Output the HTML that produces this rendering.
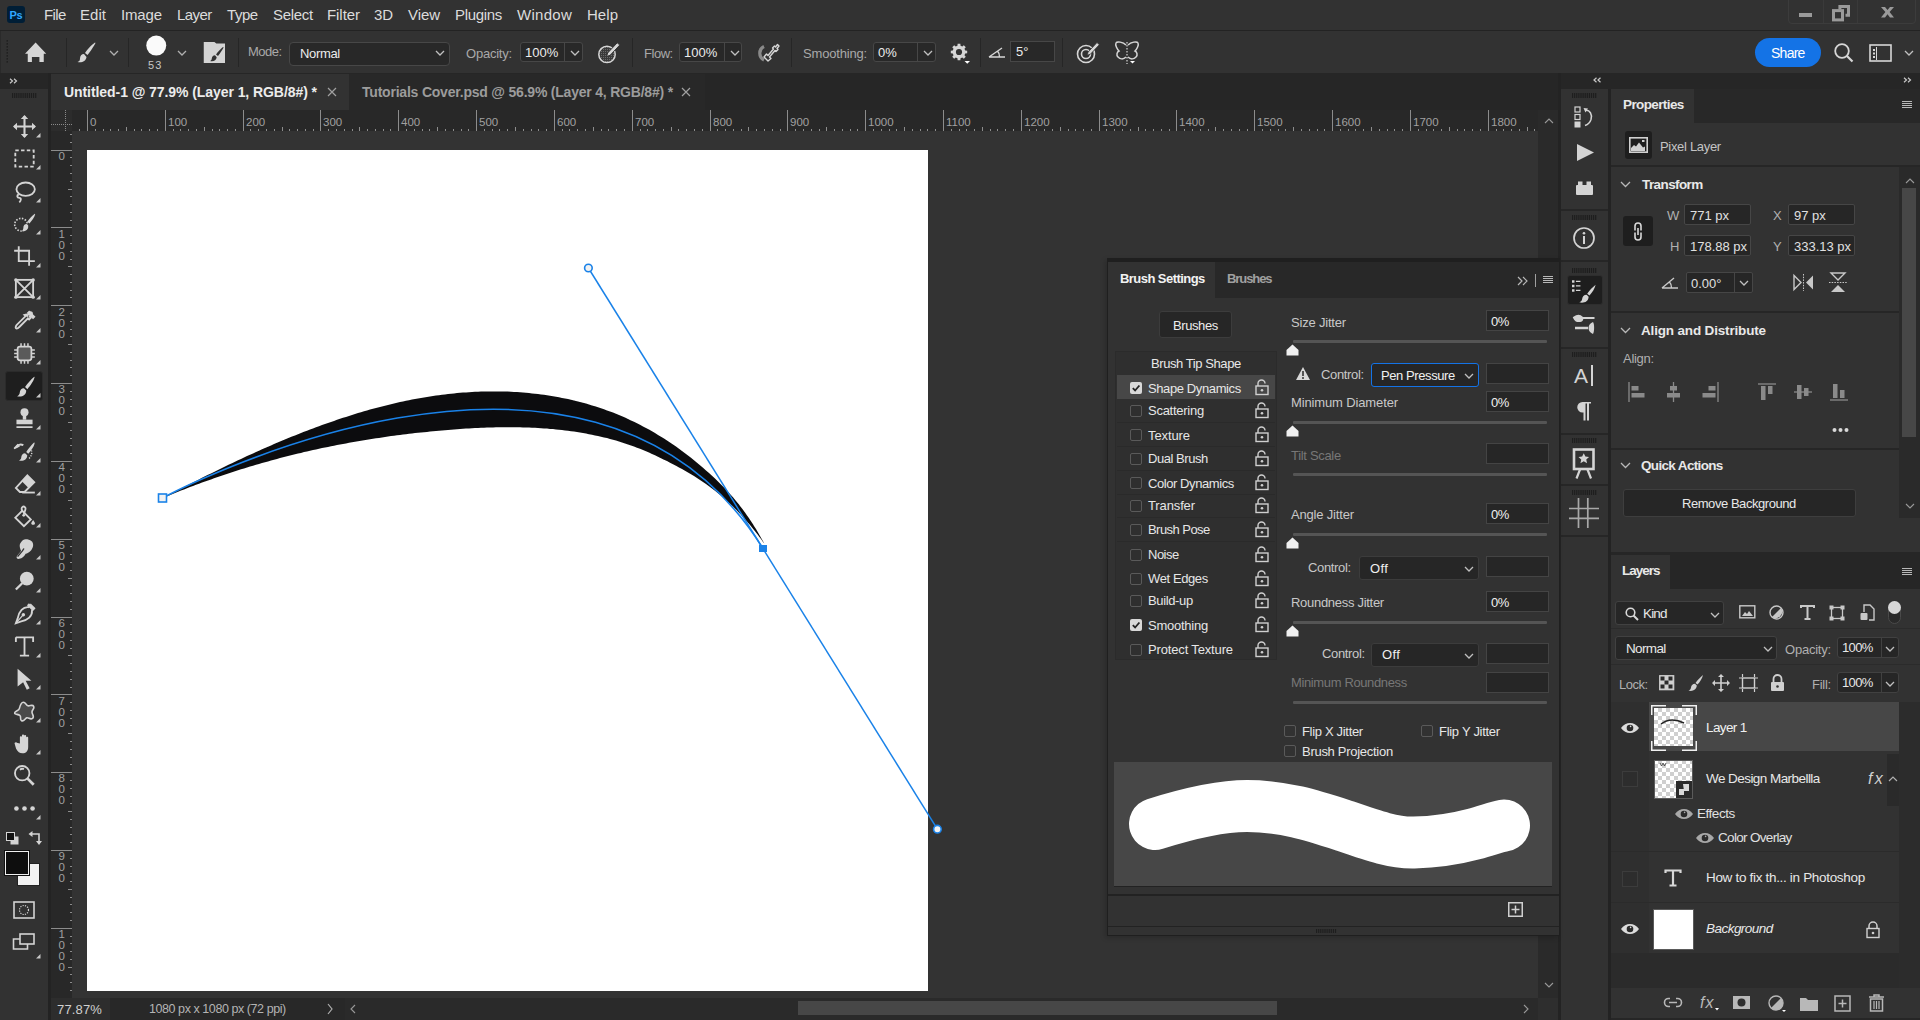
<!DOCTYPE html>
<html><head><meta charset="utf-8">
<style>
*{margin:0;padding:0;box-sizing:border-box}
html,body{width:1920px;height:1020px;overflow:hidden;background:#333;font-family:"Liberation Sans",sans-serif;color:#d8d8d8}
.a{position:absolute}
.t{position:absolute;white-space:nowrap;line-height:1}
svg{position:absolute;overflow:visible}
</style></head><body>
<div class="a" style="left:0px;top:0px;width:1920px;height:30px;background:#323232;"></div>
<div class="a" style="left:0px;top:30px;width:1920px;height:1px;background:#232323;"></div>
<div class="a" style="left:0px;top:31px;width:1920px;height:42px;background:#323232;"></div>
<div class="a" style="left:0px;top:31px;width:1px;height:42px;background:#2a2a2a;"></div>
<div class="a" style="left:0px;top:73px;width:1561px;height:37px;background:#262626;"></div>
<div class="a" style="left:0px;top:73px;width:48px;height:16px;background:#262626;"></div>
<div class="a" style="left:0px;top:89px;width:48px;height:931px;background:#323232;"></div>
<div class="a" style="left:48px;top:73px;width:3px;height:947px;background:#232323;"></div>
<div class="a" style="left:51px;top:74px;width:298px;height:36px;background:#323232;"></div>
<div class="a" style="left:349px;top:74px;width:356px;height:36px;background:#282828;"></div>
<div class="a" style="left:51px;top:110px;width:1487px;height:21px;background:#282828;"></div>
<div class="a" style="left:51px;top:131px;width:21px;height:867px;background:#282828;"></div>
<div class="a" style="left:72px;top:131px;width:1466px;height:867px;background:#333333;"></div>
<div class="a" style="left:87px;top:150px;width:841px;height:841px;background:#ffffff;"></div>
<div class="a" style="left:51px;top:998px;width:1507px;height:22px;background:#282828;"></div>
<div class="a" style="left:51px;top:998px;width:59px;height:22px;background:#2d2d2d;"></div>
<div class="a" style="left:1538px;top:110px;width:20px;height:888px;background:#2a2a2a;"></div>
<div class="a" style="left:1538px;top:998px;width:20px;height:22px;background:#2e2e2e;"></div>
<div class="a" style="left:1558px;top:73px;width:3px;height:947px;background:#232323;"></div>
<div class="a" style="left:1561px;top:73px;width:359px;height:16px;background:#262626;"></div>
<div class="a" style="left:1561px;top:89px;width:47px;height:931px;background:#323232;"></div>
<div class="a" style="left:1608px;top:89px;width:3px;height:931px;background:#232323;"></div>
<div class="a" style="left:1611px;top:89px;width:309px;height:34px;background:#282828;"></div>
<div class="a" style="left:1611px;top:89px;width:83px;height:35px;background:#323232;"></div>
<div class="a" style="left:1611px;top:123px;width:309px;height:429px;background:#323232;"></div>
<div class="a" style="left:1611px;top:552px;width:309px;height:3px;background:#262626;"></div>
<div class="a" style="left:1611px;top:555px;width:309px;height:34px;background:#262626;"></div>
<div class="a" style="left:1611px;top:555px;width:59px;height:34px;background:#323232;"></div>
<div class="a" style="left:1611px;top:589px;width:309px;height:431px;background:#323232;"></div>
<div class="a" style="left:7px;top:6px;width:18px;height:17px;background:#001e36;border-radius:3px"></div>
<div class="t" style="letter-spacing:-0.312px;left:9.5px;top:9.69px;font-size:11px;color:#31a8ff;font-weight:bold;">Ps</div>
<div class="t" style="letter-spacing:-0.621px;left:44px;top:6.90px;font-size:15px;color:#dcdcdc;">File</div>
<div class="t" style="letter-spacing:0.040px;left:80px;top:6.90px;font-size:15px;color:#dcdcdc;">Edit</div>
<div class="t" style="letter-spacing:-0.156px;left:121px;top:6.90px;font-size:15px;color:#dcdcdc;">Image</div>
<div class="t" style="letter-spacing:-0.562px;left:177px;top:6.90px;font-size:15px;color:#dcdcdc;">Layer</div>
<div class="t" style="letter-spacing:-0.438px;left:227px;top:6.90px;font-size:15px;color:#dcdcdc;">Type</div>
<div class="t" style="letter-spacing:-0.310px;left:273px;top:6.90px;font-size:15px;color:#dcdcdc;">Select</div>
<div class="t" style="letter-spacing:-0.062px;left:327px;top:6.90px;font-size:15px;color:#dcdcdc;">Filter</div>
<div class="t" style="letter-spacing:-0.125px;left:374px;top:6.90px;font-size:15px;color:#dcdcdc;">3D</div>
<div class="t" style="letter-spacing:-0.071px;left:408px;top:6.90px;font-size:15px;color:#dcdcdc;">View</div>
<div class="t" style="letter-spacing:-0.339px;left:455px;top:6.90px;font-size:15px;color:#dcdcdc;">Plugins</div>
<div class="t" style="letter-spacing:0.298px;left:517px;top:6.90px;font-size:15px;color:#dcdcdc;">Window</div>
<div class="t" style="letter-spacing:0.040px;left:587px;top:6.90px;font-size:15px;color:#dcdcdc;">Help</div>
<div class="a" style="left:1788px;top:-4px;width:128px;height:28px;border:1px solid #3c3c3c;border-radius:0 0 4px 4px"></div>
<div class="a" style="left:1823px;top:0px;width:1px;height:23px;background:#3a3a3a;"></div>
<div class="a" style="left:1857px;top:0px;width:1px;height:23px;background:#3a3a3a;"></div>
<div class="a" style="left:1799px;top:13px;width:13px;height:4px;background:#9a9a9a;"></div>
<svg style="left:1831px;top:4px" width="21" height="18" viewBox="0 0 21 18"><path d="M8.9 5.5V2.5H17.5V11.3H14.5" fill="none" stroke="#9a9a9a" stroke-width="3"/><rect x="2.5" y="6.6" width="9" height="9.3" fill="none" stroke="#9a9a9a" stroke-width="3"/></svg>
<svg style="left:1880px;top:5px" width="16" height="14" viewBox="0 0 16 14"><path d="M1 2H5L7.5 5 10 2H14L9.6 7 14 12.5H10L7.5 9.3 5 12.5H1L5.4 7Z" fill="#9a9a9a"/></svg>
<svg style="left:6px;top:40px" width="3" height="24" viewBox="0 0 3 24"><rect x="0.5" y="0" width="1.5" height="1.6" fill="#202020"/><rect x="0.5" y="3" width="1.5" height="1.6" fill="#202020"/><rect x="0.5" y="6" width="1.5" height="1.6" fill="#202020"/><rect x="0.5" y="9" width="1.5" height="1.6" fill="#202020"/><rect x="0.5" y="12" width="1.5" height="1.6" fill="#202020"/><rect x="0.5" y="15" width="1.5" height="1.6" fill="#202020"/><rect x="0.5" y="18" width="1.5" height="1.6" fill="#202020"/><rect x="0.5" y="21" width="1.5" height="1.6" fill="#202020"/></svg>
<svg style="left:25px;top:42px" width="22" height="21" viewBox="0 0 22 21"><path d="M10.6 0.5L0 11.75H2.75V19.9H6.9V14.9H14.4V19.9H18.75V11.75H21.25Z" fill="#d6d6d6"/></svg>
<div class="a" style="left:66px;top:38px;width:1px;height:29px;background:#262626;"></div>
<svg style="left:76px;top:41px" width="22" height="22" viewBox="0 0 22 22"><path d="M19 1.5c-3 2-8 7-10 10.5l2.5 2C14 11 18 5 19.5 2z M8 13c-2.5 0-4 2-4 4.5S3 20.5 1.5 21c4 1 8.5-.5 9-5z" fill="#d6d6d6"/></svg>
<svg style="left:109px;top:50px" width="10" height="6" viewBox="0 0 10 6"><path d="M1 1l4 4 4-4" fill="none" stroke="#b0b0b0" stroke-width="1.3"/></svg>
<div class="a" style="left:128px;top:38px;width:1px;height:29px;background:#262626;"></div>
<svg style="left:146px;top:35px" width="21" height="21" viewBox="0 0 21 21"><circle cx="10.25" cy="10.6" r="10" fill="#fafafa" style="filter:blur(0.4px)"/></svg>
<div class="t" style="letter-spacing:1.167px;left:148px;top:59.69px;font-size:11px;color:#c8c8c8;">53</div>
<svg style="left:177px;top:50px" width="10" height="6" viewBox="0 0 10 6"><path d="M1 1l4 4 4-4" fill="none" stroke="#b0b0b0" stroke-width="1.3"/></svg>
<svg style="left:203px;top:41px" width="24" height="23" viewBox="0 0 24 23"><path d="M0.75 0.9H11.4L13.3 2.4H22V22H0.75z" fill="#d4d4d4"/><path d="M20 6c-2 1.5-5.5 5-7 7.5l2 1.6c1.8-2.6 4.8-6.5 5.6-8.6z M12 14.3c-2 0-3 1.4-3.2 3.2-.1 1.3-.8 2.2-1.8 2.5 3 .9 6.3-.3 6.7-3.8z" fill="#323232"/></svg>
<div class="a" style="left:238px;top:38px;width:1px;height:29px;background:#262626;"></div>
<div class="t" style="letter-spacing:-0.476px;left:248px;top:45.00px;font-size:13px;color:#a9a9a9;">Mode:</div>
<div class="a" style="left:289px;top:42px;width:161px;height:24px;background:#282828;border:1px solid #474747;border-radius:4px;"></div>
<div class="t" style="letter-spacing:-0.347px;left:300px;top:46.80px;font-size:13px;color:#ececec;">Normal</div>
<svg style="left:435px;top:50px" width="10" height="6" viewBox="0 0 10 6"><path d="M1 1l4 4 4-4" fill="none" stroke="#c0c0c0" stroke-width="1.3"/></svg>
<div class="t" style="letter-spacing:-0.225px;left:466px;top:47.00px;font-size:13px;color:#a9a9a9;">Opacity:</div>
<div class="a" style="left:520px;top:42px;width:63px;height:20px;background:#282828;border:1px solid #474747;border-radius:3px;"></div>
<div class="a" style="left:564px;top:43px;width:1px;height:18px;background:#474747;"></div>
<div class="t" style="left:525px;top:45.50px;font-size:13px;color:#ececec;">100%</div>
<svg style="left:570px;top:50.0px" width="10" height="6" viewBox="0 0 10 6"><path d="M1 1l4 4 4-4" fill="none" stroke="#c0c0c0" stroke-width="1.3"/></svg>
<svg style="left:597px;top:41px" width="26" height="24" viewBox="0 0 26 24"><defs><pattern id="hp" width="2" height="2" patternUnits="userSpaceOnUse"><rect width="2" height="2" fill="#3a3a3a"/><rect width="1" height="1" fill="#6a6a6a"/></pattern></defs><circle cx="10" cy="13.4" r="8.2" fill="url(#hp)" stroke="#d6d6d6" stroke-width="1.5"/><path d="M20.2 1.8l2.6 2.2-9.6 10.2-3.6 1.4 1-3.6z" fill="#d6d6d6" stroke="#323232" stroke-width="1"/></svg>
<div class="a" style="left:632px;top:38px;width:1px;height:29px;background:#262626;"></div>
<div class="t" style="letter-spacing:-0.458px;left:644px;top:47.00px;font-size:13px;color:#a9a9a9;">Flow:</div>
<div class="a" style="left:679px;top:42px;width:63px;height:20px;background:#282828;border:1px solid #474747;border-radius:3px;"></div>
<div class="a" style="left:724px;top:43px;width:1px;height:18px;background:#474747;"></div>
<div class="t" style="left:684px;top:45.50px;font-size:13px;color:#ececec;">100%</div>
<svg style="left:730px;top:50.0px" width="10" height="6" viewBox="0 0 10 6"><path d="M1 1l4 4 4-4" fill="none" stroke="#c0c0c0" stroke-width="1.3"/></svg>
<svg style="left:754px;top:42px" width="26" height="22" viewBox="0 0 26 22"><path d="M10 4.5A7.5 7.5 0 0 0 10 18" fill="none" stroke="#8a8a8a" stroke-width="3.2"/><path d="M23.5 2.5l1.5 1.5-2 2.5 1 1-2 2-1-1-5.5 6.5 1.5 1.5-3 2.5-4-4 2.5-3 1.5 1.5 5.5-6.5-1-1 2-2 1 1z" fill="none" stroke="#d6d6d6" stroke-width="1.4" stroke-linejoin="round"/></svg>
<div class="a" style="left:791px;top:38px;width:1px;height:29px;background:#262626;"></div>
<div class="t" style="letter-spacing:-0.186px;left:803px;top:47.00px;font-size:13px;color:#a9a9a9;">Smoothing:</div>
<div class="a" style="left:873px;top:42px;width:63px;height:20px;background:#282828;border:1px solid #474747;border-radius:3px;"></div>
<div class="a" style="left:917px;top:43px;width:1px;height:18px;background:#474747;"></div>
<div class="t" style="left:878px;top:45.50px;font-size:13px;color:#ececec;">0%</div>
<svg style="left:923px;top:50.0px" width="10" height="6" viewBox="0 0 10 6"><path d="M1 1l4 4 4-4" fill="none" stroke="#c0c0c0" stroke-width="1.3"/></svg>
<svg style="left:949px;top:42px" width="24" height="22" viewBox="0 0 24 22"><g transform="translate(10,10)"><path d="M8.19 -1.36 L8.19 1.36 L6.21 1.54 L5.48 3.30 L6.75 4.83 L4.83 6.75 L3.30 5.48 L1.54 6.21 L1.36 8.19 L-1.36 8.19 L-1.54 6.21 L-3.30 5.48 L-4.83 6.75 L-6.75 4.83 L-5.48 3.30 L-6.21 1.54 L-8.19 1.36 L-8.19 -1.36 L-6.21 -1.54 L-5.48 -3.30 L-6.75 -4.83 L-4.83 -6.75 L-3.30 -5.48 L-1.54 -6.21 L-1.36 -8.19 L1.36 -8.19 L1.54 -6.21 L3.30 -5.48 L4.83 -6.75 L6.75 -4.83 L5.48 -3.30 L6.21 -1.54Z" fill="#d6d6d6"/><circle r="3.1" fill="#323232"/></g><path d="M15.5 19h5.5l-2.75 2.75z" fill="#fff"/></svg>
<div class="a" style="left:980px;top:38px;width:1px;height:29px;background:#262626;"></div>
<svg style="left:988px;top:44px" width="18" height="14" viewBox="0 0 18 14"><path d="M1 13h16M1 13L14 4M9.5 7c1.5 1.5 2 3.5 2 6" fill="none" stroke="#d6d6d6" stroke-width="1.4"/></svg>
<div class="a" style="left:1010px;top:41px;width:45px;height:21px;background:#282828;border:1px solid #474747;border-radius:0px;"></div>
<div class="t" style="left:1016px;top:45.00px;font-size:13px;color:#ececec;">5°</div>
<div class="a" style="left:1062px;top:38px;width:1px;height:29px;background:#262626;"></div>
<svg style="left:1076px;top:41px" width="24" height="24" viewBox="0 0 24 24"><circle cx="10" cy="13" r="8.5" fill="none" stroke="#d6d6d6" stroke-width="1.6"/><circle cx="10" cy="13" r="4.5" fill="none" stroke="#d6d6d6" stroke-width="1.6"/><path d="M21 1.5l2.3 2.3-9 9.5-3.2 1 1-3.2z" fill="#d6d6d6" stroke="#323232" stroke-width=".8"/></svg>
<svg style="left:1114px;top:41px" width="26" height="24" viewBox="0 0 26 24"><path d="M12 4C9 1 3 0 2 2s1 6 3 8c-2 1-3 4-1 6s5 3 8 0 M14 4c3-3 9-4 10-2s-1 6-3 8c2 1 3 4 1 6s-5 3-8 0" fill="none" stroke="#d6d6d6" stroke-width="1.5"/><path d="M13 1v22" stroke="#d6d6d6" stroke-width="1.2" stroke-dasharray="1.5 1.5"/><path d="M16 20h5l-2.5 2.5z" fill="#fff"/></svg>
<div class="a" style="left:1755px;top:38px;width:66px;height:29px;background:#1473e6;border-radius:15px"></div>
<div class="t" style="letter-spacing:-0.747px;left:1771px;top:45.65px;font-size:14px;color:#ffffff;">Share</div>
<svg style="left:1834px;top:43px" width="21" height="21" viewBox="0 0 21 21"><circle cx="8" cy="8" r="6.8" fill="none" stroke="#d6d6d6" stroke-width="1.8"/><path d="M13 13l5.5 5.5" stroke="#d6d6d6" stroke-width="2.2"/></svg>
<svg style="left:1869px;top:44px" width="24" height="19" viewBox="0 0 24 19"><rect x="1" y="1" width="21" height="16" fill="none" stroke="#d6d6d6" stroke-width="1.6"/><rect x="4" y="5" width="2" height="2" fill="#d6d6d6"/><rect x="4" y="8.5" width="2" height="2" fill="#d6d6d6"/><rect x="4" y="12" width="2" height="2" fill="#d6d6d6"/><path d="M7.5 3v13" stroke="#d6d6d6" stroke-width="1"/></svg>
<svg style="left:1904px;top:50px" width="10" height="6" viewBox="0 0 10 6"><path d="M1 1l4 4 4-4" fill="none" stroke="#c0c0c0" stroke-width="1.3"/></svg>
<svg style="left:9px;top:78px" width="10" height="6" viewBox="0 0 10 6"><path d="M1 .8l2.5 2.2L1 5.2M5 .8l2.5 2.2L5 5.2" fill="none" stroke="#c8c8c8" stroke-width="1.2"/></svg>
<div class="t" style="letter-spacing:-0.070px;left:64px;top:84.75px;font-size:14px;color:#ececec;font-weight:bold;">Untitled-1 @ 77.9% (Layer 1, RGB/8#) *</div>
<svg style="left:327px;top:87px" width="10" height="10" viewBox="0 0 10 10"><path d="M1 1l8 8M9 1L1 9" stroke="#a0a0a0" stroke-width="1.2"/></svg>
<div class="t" style="letter-spacing:-0.209px;left:362px;top:84.75px;font-size:14px;color:#9c9c9c;font-weight:bold;">Tutorials Cover.psd @ 56.9% (Layer 4, RGB/8#) *</div>
<svg style="left:681px;top:87px" width="10" height="10" viewBox="0 0 10 10"><path d="M1 1l8 8M9 1L1 9" stroke="#a0a0a0" stroke-width="1.2"/></svg>
<svg style="left:12px;top:93px" width="26" height="5" viewBox="0 0 26 5"><rect x="0.0" y="0" width="1.2" height="5" fill="#1e1e1e"/><rect x="2.1" y="0" width="1.2" height="5" fill="#1e1e1e"/><rect x="4.2" y="0" width="1.2" height="5" fill="#1e1e1e"/><rect x="6.3" y="0" width="1.2" height="5" fill="#1e1e1e"/><rect x="8.4" y="0" width="1.2" height="5" fill="#1e1e1e"/><rect x="10.5" y="0" width="1.2" height="5" fill="#1e1e1e"/><rect x="12.6" y="0" width="1.2" height="5" fill="#1e1e1e"/><rect x="14.7" y="0" width="1.2" height="5" fill="#1e1e1e"/><rect x="16.8" y="0" width="1.2" height="5" fill="#1e1e1e"/><rect x="18.9" y="0" width="1.2" height="5" fill="#1e1e1e"/><rect x="21.0" y="0" width="1.2" height="5" fill="#1e1e1e"/><rect x="23.1" y="0" width="1.2" height="5" fill="#1e1e1e"/></svg>
<svg style="left:0;top:0" width="1920" height="1020"><path d="M79.5 129V131 M87.5 110V131 M95.5 129V131 M103.5 129V131 M110.5 129V131 M118.5 129V131 M126.5 127V131 M134.5 129V131 M141.5 129V131 M149.5 129V131 M157.5 129V131 M165.5 110V131 M173.5 129V131 M180.5 129V131 M188.5 129V131 M196.5 129V131 M204.5 127V131 M212.5 129V131 M219.5 129V131 M227.5 129V131 M235.5 129V131 M243.5 110V131 M250.5 129V131 M258.5 129V131 M266.5 129V131 M274.5 129V131 M282.5 127V131 M289.5 129V131 M297.5 129V131 M305.5 129V131 M313.5 129V131 M320.5 110V131 M328.5 129V131 M336.5 129V131 M344.5 129V131 M352.5 129V131 M359.5 127V131 M367.5 129V131 M375.5 129V131 M383.5 129V131 M390.5 129V131 M398.5 110V131 M406.5 129V131 M414.5 129V131 M422.5 129V131 M429.5 129V131 M437.5 127V131 M445.5 129V131 M453.5 129V131 M461.5 129V131 M468.5 129V131 M476.5 110V131 M484.5 129V131 M492.5 129V131 M499.5 129V131 M507.5 129V131 M515.5 127V131 M523.5 129V131 M531.5 129V131 M538.5 129V131 M546.5 129V131 M554.5 110V131 M562.5 129V131 M569.5 129V131 M577.5 129V131 M585.5 129V131 M593.5 127V131 M601.5 129V131 M608.5 129V131 M616.5 129V131 M624.5 129V131 M632.5 110V131 M640.5 129V131 M647.5 129V131 M655.5 129V131 M663.5 129V131 M671.5 127V131 M678.5 129V131 M686.5 129V131 M694.5 129V131 M702.5 129V131 M710.5 110V131 M717.5 129V131 M725.5 129V131 M733.5 129V131 M741.5 129V131 M748.5 127V131 M756.5 129V131 M764.5 129V131 M772.5 129V131 M780.5 129V131 M787.5 110V131 M795.5 129V131 M803.5 129V131 M811.5 129V131 M819.5 129V131 M826.5 127V131 M834.5 129V131 M842.5 129V131 M850.5 129V131 M857.5 129V131 M865.5 110V131 M873.5 129V131 M881.5 129V131 M889.5 129V131 M896.5 129V131 M904.5 127V131 M912.5 129V131 M920.5 129V131 M927.5 129V131 M935.5 129V131 M943.5 110V131 M951.5 129V131 M959.5 129V131 M966.5 129V131 M974.5 129V131 M982.5 127V131 M990.5 129V131 M997.5 129V131 M1005.5 129V131 M1013.5 129V131 M1021.5 110V131 M1029.5 129V131 M1036.5 129V131 M1044.5 129V131 M1052.5 129V131 M1060.5 127V131 M1068.5 129V131 M1075.5 129V131 M1083.5 129V131 M1091.5 129V131 M1099.5 110V131 M1106.5 129V131 M1114.5 129V131 M1122.5 129V131 M1130.5 129V131 M1138.5 127V131 M1145.5 129V131 M1153.5 129V131 M1161.5 129V131 M1169.5 129V131 M1176.5 110V131 M1184.5 129V131 M1192.5 129V131 M1200.5 129V131 M1208.5 129V131 M1215.5 127V131 M1223.5 129V131 M1231.5 129V131 M1239.5 129V131 M1247.5 129V131 M1254.5 110V131 M1262.5 129V131 M1270.5 129V131 M1278.5 129V131 M1285.5 129V131 M1293.5 127V131 M1301.5 129V131 M1309.5 129V131 M1317.5 129V131 M1324.5 129V131 M1332.5 110V131 M1340.5 129V131 M1348.5 129V131 M1355.5 129V131 M1363.5 129V131 M1371.5 127V131 M1379.5 129V131 M1387.5 129V131 M1394.5 129V131 M1402.5 129V131 M1410.5 110V131 M1418.5 129V131 M1426.5 129V131 M1433.5 129V131 M1441.5 129V131 M1449.5 127V131 M1457.5 129V131 M1464.5 129V131 M1472.5 129V131 M1480.5 129V131 M1488.5 110V131 M1496.5 129V131 M1503.5 129V131 M1511.5 129V131 M1519.5 129V131 M1527.5 127V131 M1534.5 129V131 M70 134.5H72 M70 142.5H72 M51 150.5H72 M70 157.5H72 M70 165.5H72 M70 173.5H72 M70 181.5H72 M68 189.5H72 M70 196.5H72 M70 204.5H72 M70 212.5H72 M70 220.5H72 M51 227.5H72 M70 235.5H72 M70 243.5H72 M70 251.5H72 M70 259.5H72 M68 266.5H72 M70 274.5H72 M70 282.5H72 M70 290.5H72 M70 297.5H72 M51 305.5H72 M70 313.5H72 M70 321.5H72 M70 329.5H72 M70 336.5H72 M68 344.5H72 M70 352.5H72 M70 360.5H72 M70 367.5H72 M70 375.5H72 M51 383.5H72 M70 391.5H72 M70 399.5H72 M70 406.5H72 M70 414.5H72 M68 422.5H72 M70 430.5H72 M70 438.5H72 M70 445.5H72 M70 453.5H72 M51 461.5H72 M70 469.5H72 M70 476.5H72 M70 484.5H72 M70 492.5H72 M68 500.5H72 M70 508.5H72 M70 515.5H72 M70 523.5H72 M70 531.5H72 M51 539.5H72 M70 546.5H72 M70 554.5H72 M70 562.5H72 M70 570.5H72 M68 578.5H72 M70 585.5H72 M70 593.5H72 M70 601.5H72 M70 609.5H72 M51 617.5H72 M70 624.5H72 M70 632.5H72 M70 640.5H72 M70 648.5H72 M68 655.5H72 M70 663.5H72 M70 671.5H72 M70 679.5H72 M70 687.5H72 M51 694.5H72 M70 702.5H72 M70 710.5H72 M70 718.5H72 M70 725.5H72 M68 733.5H72 M70 741.5H72 M70 749.5H72 M70 757.5H72 M70 764.5H72 M51 772.5H72 M70 780.5H72 M70 788.5H72 M70 796.5H72 M70 803.5H72 M68 811.5H72 M70 819.5H72 M70 827.5H72 M70 834.5H72 M70 842.5H72 M51 850.5H72 M70 858.5H72 M70 866.5H72 M70 873.5H72 M70 881.5H72 M68 889.5H72 M70 897.5H72 M70 904.5H72 M70 912.5H72 M70 920.5H72 M51 928.5H72 M70 936.5H72 M70 943.5H72 M70 951.5H72 M70 959.5H72 M68 967.5H72 M70 974.5H72 M70 982.5H72 M70 990.5H72" stroke="#8c8c8c" stroke-width="1"/></svg>
<div class="t" style="left:90px;top:117.27px;font-size:11.5px;color:#a0a0a0;">0</div>
<div class="t" style="left:168px;top:117.27px;font-size:11.5px;color:#a0a0a0;">100</div>
<div class="t" style="left:246px;top:117.27px;font-size:11.5px;color:#a0a0a0;">200</div>
<div class="t" style="left:323px;top:117.27px;font-size:11.5px;color:#a0a0a0;">300</div>
<div class="t" style="left:401px;top:117.27px;font-size:11.5px;color:#a0a0a0;">400</div>
<div class="t" style="left:479px;top:117.27px;font-size:11.5px;color:#a0a0a0;">500</div>
<div class="t" style="left:557px;top:117.27px;font-size:11.5px;color:#a0a0a0;">600</div>
<div class="t" style="left:635px;top:117.27px;font-size:11.5px;color:#a0a0a0;">700</div>
<div class="t" style="left:713px;top:117.27px;font-size:11.5px;color:#a0a0a0;">800</div>
<div class="t" style="left:790px;top:117.27px;font-size:11.5px;color:#a0a0a0;">900</div>
<div class="t" style="left:868px;top:117.27px;font-size:11.5px;color:#a0a0a0;">1000</div>
<div class="t" style="left:946px;top:117.27px;font-size:11.5px;color:#a0a0a0;">1100</div>
<div class="t" style="left:1024px;top:117.27px;font-size:11.5px;color:#a0a0a0;">1200</div>
<div class="t" style="left:1102px;top:117.27px;font-size:11.5px;color:#a0a0a0;">1300</div>
<div class="t" style="left:1179px;top:117.27px;font-size:11.5px;color:#a0a0a0;">1400</div>
<div class="t" style="left:1257px;top:117.27px;font-size:11.5px;color:#a0a0a0;">1500</div>
<div class="t" style="left:1335px;top:117.27px;font-size:11.5px;color:#a0a0a0;">1600</div>
<div class="t" style="left:1413px;top:117.27px;font-size:11.5px;color:#a0a0a0;">1700</div>
<div class="t" style="left:1491px;top:117.27px;font-size:11.5px;color:#a0a0a0;">1800</div>
<div class="t" style="left:58.5px;top:150.87px;font-size:11.5px;color:#a0a0a0;">0</div>
<div class="t" style="left:58.5px;top:228.69px;font-size:11.5px;color:#a0a0a0;">1</div>
<div class="t" style="left:58.5px;top:239.69px;font-size:11.5px;color:#a0a0a0;">0</div>
<div class="t" style="left:58.5px;top:250.69px;font-size:11.5px;color:#a0a0a0;">0</div>
<div class="t" style="left:58.5px;top:306.51px;font-size:11.5px;color:#a0a0a0;">2</div>
<div class="t" style="left:58.5px;top:317.51px;font-size:11.5px;color:#a0a0a0;">0</div>
<div class="t" style="left:58.5px;top:328.51px;font-size:11.5px;color:#a0a0a0;">0</div>
<div class="t" style="left:58.5px;top:384.33px;font-size:11.5px;color:#a0a0a0;">3</div>
<div class="t" style="left:58.5px;top:395.33px;font-size:11.5px;color:#a0a0a0;">0</div>
<div class="t" style="left:58.5px;top:406.33px;font-size:11.5px;color:#a0a0a0;">0</div>
<div class="t" style="left:58.5px;top:462.15px;font-size:11.5px;color:#a0a0a0;">4</div>
<div class="t" style="left:58.5px;top:473.15px;font-size:11.5px;color:#a0a0a0;">0</div>
<div class="t" style="left:58.5px;top:484.15px;font-size:11.5px;color:#a0a0a0;">0</div>
<div class="t" style="left:58.5px;top:539.97px;font-size:11.5px;color:#a0a0a0;">5</div>
<div class="t" style="left:58.5px;top:550.97px;font-size:11.5px;color:#a0a0a0;">0</div>
<div class="t" style="left:58.5px;top:561.97px;font-size:11.5px;color:#a0a0a0;">0</div>
<div class="t" style="left:58.5px;top:617.79px;font-size:11.5px;color:#a0a0a0;">6</div>
<div class="t" style="left:58.5px;top:628.79px;font-size:11.5px;color:#a0a0a0;">0</div>
<div class="t" style="left:58.5px;top:639.79px;font-size:11.5px;color:#a0a0a0;">0</div>
<div class="t" style="left:58.5px;top:695.61px;font-size:11.5px;color:#a0a0a0;">7</div>
<div class="t" style="left:58.5px;top:706.61px;font-size:11.5px;color:#a0a0a0;">0</div>
<div class="t" style="left:58.5px;top:717.61px;font-size:11.5px;color:#a0a0a0;">0</div>
<div class="t" style="left:58.5px;top:773.43px;font-size:11.5px;color:#a0a0a0;">8</div>
<div class="t" style="left:58.5px;top:784.43px;font-size:11.5px;color:#a0a0a0;">0</div>
<div class="t" style="left:58.5px;top:795.43px;font-size:11.5px;color:#a0a0a0;">0</div>
<div class="t" style="left:58.5px;top:851.25px;font-size:11.5px;color:#a0a0a0;">9</div>
<div class="t" style="left:58.5px;top:862.25px;font-size:11.5px;color:#a0a0a0;">0</div>
<div class="t" style="left:58.5px;top:873.25px;font-size:11.5px;color:#a0a0a0;">0</div>
<div class="t" style="left:58.5px;top:929.07px;font-size:11.5px;color:#a0a0a0;">1</div>
<div class="t" style="left:58.5px;top:940.07px;font-size:11.5px;color:#a0a0a0;">0</div>
<div class="t" style="left:58.5px;top:951.07px;font-size:11.5px;color:#a0a0a0;">0</div>
<div class="t" style="left:58.5px;top:962.07px;font-size:11.5px;color:#a0a0a0;">0</div>
<div class="a" style="left:51px;top:110px;width:21px;height:21px;background:#2c2c2c;"></div>
<svg style="left:51px;top:110px" width="21" height="21" viewBox="0 0 21 21"><path d="M0 14.5H21M14.5 0V21" stroke="#8a8a8a" stroke-width="1" stroke-dasharray="1 1"/></svg>
<div class="t" style="letter-spacing:0.165px;left:57px;top:1002.50px;font-size:13px;color:#d0d0d0;">77.87%</div>
<div class="t" style="letter-spacing:-0.433px;left:149px;top:1003.42px;font-size:12.5px;color:#b4b4b4;">1080 px x 1080 px (72 ppi)</div>
<svg style="left:327px;top:1003px" width="6" height="12" viewBox="0 0 6 12"><path d="M1 1l4 5-4 5" fill="none" stroke="#b0b0b0" stroke-width="1.2"/></svg>
<div class="a" style="left:345px;top:998px;width:1193px;height:22px;background:#2a2a2a;"></div>
<svg style="left:350px;top:1004px" width="6" height="10" viewBox="0 0 6 10"><path d="M5 1L1 5l4 4" fill="none" stroke="#999" stroke-width="1.1"/></svg>
<div class="a" style="left:798px;top:1001px;width:479px;height:14px;background:#474747;"></div>
<svg style="left:1523px;top:1004px" width="6" height="10" viewBox="0 0 6 10"><path d="M1 1l4 4-4 4" fill="none" stroke="#999" stroke-width="1.1"/></svg>
<svg style="left:1544px;top:118px" width="10" height="6" viewBox="0 0 10 6"><path d="M1 5l4-4 4 4" fill="none" stroke="#999" stroke-width="1.1"/></svg>
<svg style="left:1544px;top:982px" width="10" height="6" viewBox="0 0 10 6"><path d="M1 1l4 4 4-4" fill="none" stroke="#999" stroke-width="1.1"/></svg>
<svg style="left:0;top:0" width="1920" height="1020">
<path d="M163.0,498.0 L166.0,496.4 L169.0,494.8 L172.0,493.3 L175.0,491.7 L178.0,490.1 L181.0,488.6 L184.0,487.0 L187.0,485.5 L190.0,483.9 L193.0,482.4 L196.0,480.9 L199.0,479.4 L202.0,477.8 L205.0,476.3 L208.0,474.8 L211.0,473.4 L214.0,471.9 L217.0,470.4 L220.0,468.9 L223.0,467.5 L226.0,466.0 L229.0,464.6 L232.0,463.2 L235.0,461.7 L238.0,460.3 L241.0,458.9 L244.0,457.5 L247.0,456.1 L250.0,454.7 L253.0,453.4 L256.0,452.0 L259.0,450.7 L262.0,449.3 L265.0,448.0 L268.0,446.7 L271.0,445.4 L274.0,444.1 L277.0,442.8 L280.0,441.6 L283.0,440.3 L286.0,439.1 L289.0,437.8 L292.0,436.6 L295.0,435.4 L298.0,434.2 L301.0,433.0 L304.0,431.8 L307.0,430.7 L310.0,429.5 L313.0,428.4 L316.0,427.3 L319.0,426.2 L322.0,425.1 L325.0,424.0 L328.0,422.9 L331.0,421.9 L334.0,420.9 L337.0,419.8 L340.0,418.8 L343.0,417.8 L346.0,416.9 L349.0,415.9 L352.0,415.0 L355.0,414.0 L358.0,413.1 L361.0,412.2 L364.0,411.3 L367.0,410.5 L370.0,409.6 L373.0,408.8 L376.0,408.0 L379.0,407.2 L382.0,406.4 L385.0,405.7 L388.0,404.9 L391.0,404.2 L394.0,403.5 L397.0,402.8 L400.0,402.1 L403.0,401.5 L406.0,400.8 L409.0,400.2 L412.0,399.6 L415.0,399.1 L418.0,398.5 L421.0,398.0 L424.0,397.4 L427.0,396.9 L430.0,396.5 L433.0,396.0 L436.0,395.6 L439.0,395.2 L442.0,394.8 L445.0,394.4 L448.0,394.0 L451.0,393.7 L454.0,393.4 L457.0,393.1 L460.0,392.8 L463.0,392.6 L466.0,392.4 L469.0,392.2 L472.0,392.0 L475.0,391.8 L478.0,391.7 L481.0,391.6 L484.0,391.5 L487.0,391.4 L490.0,391.4 L493.0,391.4 L496.0,391.4 L499.0,391.4 L502.0,391.5 L505.0,391.5 L508.0,391.6 L511.0,391.8 L514.0,391.9 L517.0,392.1 L520.0,392.3 L523.0,392.5 L526.0,392.8 L529.0,393.1 L532.0,393.4 L535.0,393.7 L538.0,394.1 L541.0,394.4 L544.0,394.8 L547.0,395.3 L550.0,395.7 L553.0,396.2 L556.0,396.8 L559.0,397.3 L562.0,397.9 L565.0,398.5 L568.0,399.1 L571.0,399.8 L574.0,400.5 L577.0,401.2 L580.0,402.0 L583.0,402.8 L586.0,403.6 L589.0,404.5 L592.0,405.4 L595.0,406.3 L598.0,407.2 L601.0,408.2 L604.0,409.3 L607.0,410.4 L610.0,411.5 L613.0,412.6 L616.0,413.8 L619.0,415.0 L622.0,416.3 L625.0,417.6 L628.0,419.0 L631.0,420.4 L634.0,421.8 L637.0,423.3 L640.0,424.8 L643.0,426.4 L646.0,428.0 L649.0,429.6 L652.0,431.3 L655.0,433.1 L658.0,434.9 L661.0,436.7 L664.0,438.6 L667.0,440.5 L670.0,442.5 L673.0,444.6 L676.0,446.6 L679.0,448.8 L682.0,451.0 L685.0,453.2 L688.0,455.5 L691.0,457.8 L694.0,460.2 L697.0,462.7 L700.0,465.2 L703.0,467.8 L706.0,470.4 L709.0,473.1 L712.0,475.8 L715.0,478.6 L718.0,481.4 L721.0,484.4 L724.0,487.5 L727.0,490.6 L730.0,493.9 L733.0,497.3 L736.0,500.9 L739.0,504.6 L740.0,505.9 L741.0,507.2 L742.0,508.5 L743.0,509.8 L744.0,511.2 L745.0,512.6 L746.0,514.0 L747.0,515.4 L748.0,516.8 L749.0,518.3 L750.0,519.8 L751.0,521.3 L752.0,522.8 L753.0,524.3 L754.0,525.9 L755.0,527.5 L756.0,529.1 L757.0,530.8 L758.0,532.5 L759.0,534.2 L760.0,535.9 L761.0,537.7 L762.0,539.5 L763.0,541.3 L764.0,543.1 L764.3,543.7 L764.3,543.7 L764.0,543.3 L763.0,541.9 L762.0,540.5 L761.0,539.1 L760.0,537.8 L759.0,536.4 L758.0,535.1 L757.0,533.8 L756.0,532.5 L755.0,531.2 L754.0,530.0 L753.0,528.7 L752.0,527.5 L751.0,526.2 L750.0,525.0 L749.0,523.8 L748.0,522.7 L747.0,521.5 L746.0,520.4 L745.0,519.2 L744.0,518.1 L743.0,517.0 L742.0,515.9 L741.0,514.8 L740.0,513.7 L739.0,512.7 L736.0,509.6 L733.0,506.6 L730.0,503.7 L727.0,501.0 L724.0,498.3 L721.0,495.7 L718.0,493.2 L715.0,490.8 L712.0,488.5 L709.0,486.3 L706.0,484.1 L703.0,482.0 L700.0,480.0 L697.0,478.0 L694.0,476.1 L691.0,474.3 L688.0,472.5 L685.0,470.8 L682.0,469.1 L679.0,467.4 L676.0,465.8 L673.0,464.2 L670.0,462.7 L667.0,461.1 L664.0,459.7 L661.0,458.2 L658.0,456.7 L655.0,455.3 L652.0,454.0 L649.0,452.6 L646.0,451.3 L643.0,450.1 L640.0,448.8 L637.0,447.7 L634.0,446.5 L631.0,445.4 L628.0,444.4 L625.0,443.4 L622.0,442.4 L619.0,441.5 L616.0,440.6 L613.0,439.7 L610.0,438.9 L607.0,438.1 L604.0,437.4 L601.0,436.7 L598.0,436.0 L595.0,435.4 L592.0,434.8 L589.0,434.2 L586.0,433.6 L583.0,433.1 L580.0,432.6 L577.0,432.1 L574.0,431.6 L571.0,431.2 L568.0,430.8 L565.0,430.4 L562.0,430.1 L559.0,429.7 L556.0,429.4 L553.0,429.1 L550.0,428.9 L547.0,428.6 L544.0,428.4 L541.0,428.2 L538.0,428.0 L535.0,427.8 L532.0,427.7 L529.0,427.6 L526.0,427.4 L523.0,427.4 L520.0,427.3 L517.0,427.2 L514.0,427.2 L511.0,427.2 L508.0,427.2 L505.0,427.2 L502.0,427.2 L499.0,427.3 L496.0,427.3 L493.0,427.4 L490.0,427.5 L487.0,427.6 L484.0,427.7 L481.0,427.8 L478.0,428.0 L475.0,428.1 L472.0,428.3 L469.0,428.5 L466.0,428.6 L463.0,428.8 L460.0,429.0 L457.0,429.3 L454.0,429.5 L451.0,429.7 L448.0,429.9 L445.0,430.2 L442.0,430.5 L439.0,430.7 L436.0,431.0 L433.0,431.3 L430.0,431.6 L427.0,431.9 L424.0,432.2 L421.0,432.5 L418.0,432.8 L415.0,433.1 L412.0,433.5 L409.0,433.8 L406.0,434.2 L403.0,434.6 L400.0,434.9 L397.0,435.3 L394.0,435.7 L391.0,436.1 L388.0,436.6 L385.0,437.0 L382.0,437.4 L379.0,437.9 L376.0,438.3 L373.0,438.8 L370.0,439.2 L367.0,439.7 L364.0,440.2 L361.0,440.7 L358.0,441.2 L355.0,441.7 L352.0,442.3 L349.0,442.8 L346.0,443.4 L343.0,443.9 L340.0,444.5 L337.0,445.1 L334.0,445.7 L331.0,446.3 L328.0,446.9 L325.0,447.5 L322.0,448.1 L319.0,448.8 L316.0,449.4 L313.0,450.1 L310.0,450.8 L307.0,451.4 L304.0,452.1 L301.0,452.9 L298.0,453.6 L295.0,454.3 L292.0,455.0 L289.0,455.8 L286.0,456.5 L283.0,457.3 L280.0,458.1 L277.0,458.9 L274.0,459.7 L271.0,460.5 L268.0,461.4 L265.0,462.2 L262.0,463.0 L259.0,463.9 L256.0,464.8 L253.0,465.7 L250.0,466.6 L247.0,467.5 L244.0,468.4 L241.0,469.3 L238.0,470.3 L235.0,471.2 L232.0,472.2 L229.0,473.2 L226.0,474.2 L223.0,475.2 L220.0,476.2 L217.0,477.3 L214.0,478.3 L211.0,479.4 L208.0,480.4 L205.0,481.5 L202.0,482.6 L199.0,483.7 L196.0,484.8 L193.0,486.0 L190.0,487.1 L187.0,488.3 L184.0,489.4 L181.0,490.6 L178.0,491.8 L175.0,493.0 L172.0,494.3 L169.0,495.5 L166.0,496.7 L163.0,498.0 Z" fill="#0c0c0e"/>
<path d="M162.5,498 C162.5,498 588.4,268 763,548.5" fill="none" stroke="#1a82e8" stroke-width="1.6"/>
<path d="M588.4,268 L937.4,829.2" fill="none" stroke="#1a82e8" stroke-width="1.5"/>
<rect x="158.5" y="494" width="8" height="8" fill="#f2f2f2" stroke="#1a82e8" stroke-width="1.6"/>
<rect x="759" y="545" width="8" height="7" fill="#1a82e8"/>
<circle cx="588.4" cy="268" r="3.8" fill="#f2f2f2" stroke="#1a82e8" stroke-width="1.6"/>
<circle cx="937.4" cy="829.2" r="3.8" fill="#f2f2f2" stroke="#1a82e8" stroke-width="1.6"/>
</svg>
<div class="a" style="left:5px;top:371px;width:38px;height:30px;background:#1e1e1e;border-radius:3px;border:1px solid #2b2b2b"></div>
<svg style="left:13px;top:114.5px" width="23" height="23" viewBox="0 0 20 20"><path d="M10 1v18M1 10h18" stroke="#d4d4d4" stroke-width="1.8"/><path d="M10 0l3.2 3.5H6.8zM10 20l3.2-3.5H6.8zM0 10l3.5-3.2v6.4zM20 10l-3.5-3.2v6.4z" fill="#d4d4d4"/></svg>
<svg style="left:36px;top:133px" width="5" height="5" viewBox="0 0 5 5"><path d="M4.5 0V4.5H0z" fill="#c8c8c8"/></svg>
<svg style="left:13px;top:146.5px" width="23" height="23" viewBox="0 0 20 20"><rect x="2" y="3" width="16" height="14" fill="none" stroke="#d4d4d4" stroke-width="1.6" stroke-dasharray="3 2"/></svg>
<svg style="left:36px;top:165px" width="5" height="5" viewBox="0 0 5 5"><path d="M4.5 0V4.5H0z" fill="#c8c8c8"/></svg>
<svg style="left:13px;top:179.5px" width="23" height="23" viewBox="0 0 20 20"><ellipse cx="11" cy="8" rx="8" ry="5.8" fill="none" stroke="#d4d4d4" stroke-width="1.6"/><path d="M5 12.5c-2 1-1.5 3 .5 3s1.5 2.5 0 4" fill="none" stroke="#d4d4d4" stroke-width="1.6"/></svg>
<svg style="left:36px;top:198px" width="5" height="5" viewBox="0 0 5 5"><path d="M4.5 0V4.5H0z" fill="#c8c8c8"/></svg>
<svg style="left:13px;top:211.5px" width="23" height="23" viewBox="0 0 20 20"><circle cx="7" cy="11" r="5.5" fill="none" stroke="#d4d4d4" stroke-width="1.4" stroke-dasharray="1.3 1.3"/><path d="M19 1.5c-2 1.5-5 4.5-6.5 7l1.8 1.5c2-2.2 4.5-5.5 5-8zM12 10.5c-2 0-3 1.5-3 3.2 0 1.5-.8 2.6-1.5 3 3 .5 5.8-1 5.8-4z" fill="#d4d4d4"/></svg>
<svg style="left:36px;top:230px" width="5" height="5" viewBox="0 0 5 5"><path d="M4.5 0V4.5H0z" fill="#c8c8c8"/></svg>
<svg style="left:13px;top:244.5px" width="23" height="23" viewBox="0 0 20 20"><path d="M1 5h13v13M5 1v13h14" fill="none" stroke="#d4d4d4" stroke-width="1.6" stroke-width="1.8"/></svg>
<svg style="left:36px;top:263px" width="5" height="5" viewBox="0 0 5 5"><path d="M4.5 0V4.5H0z" fill="#c8c8c8"/></svg>
<svg style="left:13px;top:276.5px" width="23" height="23" viewBox="0 0 20 20"><rect x="2.5" y="2.5" width="15" height="15" fill="none" stroke="#d4d4d4" stroke-width="1.6"/><path d="M2.5 2.5l15 15M17.5 2.5l-15 15" fill="none" stroke="#d4d4d4" stroke-width="1.6"/><g fill="#d4d4d4"><circle cx="2.5" cy="2.5" r="1.5"/><circle cx="17.5" cy="2.5" r="1.5"/><circle cx="2.5" cy="17.5" r="1.5"/><circle cx="17.5" cy="17.5" r="1.5"/></g></svg>
<svg style="left:36px;top:295px" width="5" height="5" viewBox="0 0 5 5"><path d="M4.5 0V4.5H0z" fill="#c8c8c8"/></svg>
<svg style="left:13px;top:309.5px" width="23" height="23" viewBox="0 0 20 20"><path d="M14 2.5c1.5-1.5 3.5 0 2 1.8l-1.5 1.5 1 1-1.5 1.5-1-1-7.5 7.5c-1 1-2.5 1.5-3 1s0-2 1-3l7.5-7.5-1-1L11.5 4l1 1z" fill="none" stroke="#d4d4d4" stroke-width="1.6" stroke-width="1.4"/><path d="M13 1.5l5.5 5.5" stroke="#d4d4d4" stroke-width="3"/></svg>
<svg style="left:36px;top:328px" width="5" height="5" viewBox="0 0 5 5"><path d="M4.5 0V4.5H0z" fill="#c8c8c8"/></svg>
<svg style="left:13px;top:341.5px" width="23" height="23" viewBox="0 0 20 20"><rect x="4" y="4" width="12" height="12" rx="2" fill="#5a5a5a" stroke="#d4d4d4" stroke-width="1.5"/><path d="M7 1v3M10 1v3M13 1v3M7 16v3M10 16v3M13 16v3M1 7h3M1 10h3M1 13h3M16 7h3M16 10h3M16 13h3" stroke="#d4d4d4" stroke-width="1.3"/></svg>
<svg style="left:36px;top:360px" width="5" height="5" viewBox="0 0 5 5"><path d="M4.5 0V4.5H0z" fill="#c8c8c8"/></svg>
<svg style="left:13px;top:374.5px" width="23" height="23" viewBox="0 0 20 20"><path d="M18.5 1.5c-2.5 2-6 6-8 9l2 1.8c2.5-2.8 5.5-7 6.3-10.5zM9.5 11.5c-2.3 0-3.5 1.8-3.6 3.8-.1 1.6-1 2.8-2.4 3.2 3.8 1 8-.5 8-5z" fill="#d4d4d4"/></svg>
<svg style="left:36px;top:393px" width="5" height="5" viewBox="0 0 5 5"><path d="M4.5 0V4.5H0z" fill="#c8c8c8"/></svg>
<svg style="left:13px;top:406.5px" width="23" height="23" viewBox="0 0 20 20"><circle cx="10" cy="4.5" r="3.5" fill="#d4d4d4"/><path d="M8.5 7h3v4h-3z" fill="#d4d4d4"/><path d="M3 11h14v4H3z" fill="#d4d4d4"/><path d="M3 17.5h14" stroke="#d4d4d4" stroke-width="1.5"/></svg>
<svg style="left:36px;top:425px" width="5" height="5" viewBox="0 0 5 5"><path d="M4.5 0V4.5H0z" fill="#c8c8c8"/></svg>
<svg style="left:13px;top:439.5px" width="23" height="23" viewBox="0 0 20 20"><path d="M18.5 2c-2.2 2-5 5.5-7 8.5l1.8 1.5c2.3-2.6 4.8-6 5.5-9zM10.5 11.5c-2 0-3.2 1.6-3.3 3.4-.1 1.4-.9 2.5-2 2.9 3.4.9 7.2-.5 7.2-4.5z" fill="#d4d4d4"/><path d="M9 4.5C7 3.5 4.5 4 3 6" fill="none" stroke="#d4d4d4" stroke-width="1.6" stroke-width="1.3"/><path d="M1 7.5l4-2-1-1.2z" fill="#d4d4d4" stroke="#d4d4d4" stroke-width="1.3"/><path d="M16 9c.8 2.5 0 5-2 7" fill="none" stroke="#d4d4d4" stroke-width="1.2" stroke-dasharray="1 1.2"/></svg>
<svg style="left:36px;top:458px" width="5" height="5" viewBox="0 0 5 5"><path d="M4.5 0V4.5H0z" fill="#c8c8c8"/></svg>
<svg style="left:13px;top:472.5px" width="23" height="23" viewBox="0 0 20 20"><path d="M12.5 2l6 6-8.5 8.5H6L2.5 13z" fill="none" stroke="#d4d4d4" stroke-width="1.6" stroke-width="1.5"/><path d="M12.5 2l6 6-5 5-6-6z" fill="#d4d4d4"/><path d="M8 17h11" fill="none" stroke="#d4d4d4" stroke-width="1.6" stroke-width="1.3"/></svg>
<svg style="left:36px;top:491px" width="5" height="5" viewBox="0 0 5 5"><path d="M4.5 0V4.5H0z" fill="#c8c8c8"/></svg>
<svg style="left:13px;top:504.5px" width="23" height="23" viewBox="0 0 20 20"><path d="M8 5l7.5 7.5-6 6L2 11z" fill="none" stroke="#d4d4d4" stroke-width="1.6" stroke-width="1.5"/><path d="M8 5c-1.5-3 1-4.5 2.5-3s-1 4-1 6" fill="none" stroke="#d4d4d4" stroke-width="1.6" stroke-width="1.3"/><circle cx="9.3" cy="9" r="1.2" fill="#d4d4d4"/><path d="M17.5 13c1 1.5 2 2.5 1.5 3.5s-2.5 1-3 0 .5-2 1.5-3.5z" fill="#d4d4d4"/></svg>
<svg style="left:36px;top:523px" width="5" height="5" viewBox="0 0 5 5"><path d="M4.5 0V4.5H0z" fill="#c8c8c8"/></svg>
<svg style="left:13px;top:536.5px" width="23" height="23" viewBox="0 0 20 20"><path d="M11 2c4 0 7 2 6.5 5.5S14 14 11 14.5c-1 2-3 4-5.5 4.5-2 .3-3-1-2-2.5 1-1.5 3-3 3.5-4.5C6 9 5 7 7 4.5 8 3 9.5 2 11 2z" fill="#d4d4d4"/><path d="M4 17c1.5-2 4-4 5.5-7" stroke="#323232" stroke-width="1.2" fill="none"/></svg>
<svg style="left:36px;top:555px" width="5" height="5" viewBox="0 0 5 5"><path d="M4.5 0V4.5H0z" fill="#c8c8c8"/></svg>
<svg style="left:13px;top:569.5px" width="23" height="23" viewBox="0 0 20 20"><circle cx="12" cy="7.5" r="6" fill="#d4d4d4"/><path d="M8 11.5L2.5 17" stroke="#d4d4d4" stroke-width="2"/></svg>
<svg style="left:36px;top:588px" width="5" height="5" viewBox="0 0 5 5"><path d="M4.5 0V4.5H0z" fill="#c8c8c8"/></svg>
<svg style="left:13px;top:601.5px" width="23" height="23" viewBox="0 0 20 20"><path d="M15.5 2.5l3 3-2 2C17 12 13 16 6.5 17l-4 1.5 1.5-4C5 8 9 4 13.5 4.5z" fill="none" stroke="#d4d4d4" stroke-width="1.6" stroke-width="1.5"/><path d="M13 2l5 5" stroke="#d4d4d4" stroke-width="2.5"/><circle cx="9" cy="11" r="1.5" fill="#d4d4d4"/><path d="M3 18l6-7" stroke="#d4d4d4" stroke-width="1.1"/></svg>
<svg style="left:36px;top:620px" width="5" height="5" viewBox="0 0 5 5"><path d="M4.5 0V4.5H0z" fill="#c8c8c8"/></svg>
<svg style="left:13px;top:634.5px" width="23" height="23" viewBox="0 0 20 20"><path d="M2.5 2h15v4M2.5 2v4M10 2v16M6 18h8" fill="none" stroke="#d4d4d4" stroke-width="1.6" stroke-width="2.2"/></svg>
<svg style="left:36px;top:653px" width="5" height="5" viewBox="0 0 5 5"><path d="M4.5 0V4.5H0z" fill="#c8c8c8"/></svg>
<svg style="left:13px;top:666.5px" width="23" height="23" viewBox="0 0 20 20"><path d="M4 1.5l12 10.5h-5l3.5 6.5-2.5 1.2-3.2-6.5L4 17z" fill="#d4d4d4"/></svg>
<svg style="left:36px;top:685px" width="5" height="5" viewBox="0 0 5 5"><path d="M4.5 0V4.5H0z" fill="#c8c8c8"/></svg>
<svg style="left:13px;top:699.5px" width="23" height="23" viewBox="0 0 20 20"><path d="M9 2c2 0 2.5 2.5 4 3s4-1.5 5 .5-1.5 3-1.5 5 2.5 4 .5 5.5-3.5-1-5-.5-2.5 3.5-4.5 2.5 0-3-1.5-4.5S1 13 1.5 11s3.5-1.5 4-3.5S7 2 9 2z" fill="#4a4a4a" stroke="#d4d4d4" stroke-width="1.4"/></svg>
<svg style="left:36px;top:718px" width="5" height="5" viewBox="0 0 5 5"><path d="M4.5 0V4.5H0z" fill="#c8c8c8"/></svg>
<svg style="left:13px;top:731.5px" width="23" height="23" viewBox="0 0 20 20"><path d="M6 10V4.5c0-1.2 1.8-1.2 1.8 0V9 3c0-1.2 1.8-1.2 1.8 0v6-5.5c0-1.2 1.8-1.2 1.8 0V9 5c0-1.2 1.8-1.2 1.8 0v8c0 3.5-2 5.5-5 5.5-2.5 0-4-1.5-5.5-4L1.5 10.5c-.6-1 .8-2 1.8-1.2z" fill="#d4d4d4"/></svg>
<svg style="left:36px;top:750px" width="5" height="5" viewBox="0 0 5 5"><path d="M4.5 0V4.5H0z" fill="#c8c8c8"/></svg>
<svg style="left:13px;top:763.5px" width="23" height="23" viewBox="0 0 20 20"><circle cx="8" cy="8" r="6.3" fill="none" stroke="#d4d4d4" stroke-width="1.6" stroke-width="1.8"/><path d="M12.5 12.5l5.5 5.5" stroke="#d4d4d4" stroke-width="2.4"/><path d="M6 5c1-.8 2.5-1 3.5-.5" fill="none" stroke="#d4d4d4" stroke-width="1.6" stroke-width="1.2"/></svg>
<svg style="left:13px;top:796.5px" width="23" height="23" viewBox="0 0 20 20"><circle cx="3" cy="10" r="2" fill="#d4d4d4"/><circle cx="10" cy="10" r="2" fill="#d4d4d4"/><circle cx="17" cy="10" r="2" fill="#d4d4d4"/></svg>
<svg style="left:36px;top:815px" width="5" height="5" viewBox="0 0 5 5"><path d="M4.5 0V4.5H0z" fill="#c8c8c8"/></svg>
<svg style="left:6px;top:832px" width="13" height="13" viewBox="0 0 13 13"><rect x="4.5" y="4.5" width="8" height="8" fill="#d4d4d4"/><rect x="0.5" y="0.5" width="8" height="8" fill="#111" stroke="#d4d4d4" stroke-width="1"/></svg>
<svg style="left:28px;top:831px" width="13" height="14" viewBox="0 0 13 14"><path d="M4 3h7v8" fill="none" stroke="#d4d4d4" stroke-width="1.6" stroke-width="1.5"/><path d="M0.5 3L4.5 0v6zM11 14l-3-4h6z" fill="#d4d4d4"/></svg>
<div class="a" style="left:17px;top:863px;width:23px;height:23px;background:#f2f2f2;border:1px solid #222"></div>
<div class="a" style="left:5px;top:851px;width:24px;height:24px;background:#0e0e0e;border:1.5px solid #f0f0f0;box-shadow:0 0 0 1px #111"></div>
<svg style="left:13px;top:901px" width="22" height="19" viewBox="0 0 22 19"><rect x="1" y="1" width="20" height="16" fill="none" stroke="#d4d4d4" stroke-width="1.6" stroke-width="1.5"/><circle cx="11" cy="9" r="4.5" fill="none" stroke="#d4d4d4" stroke-width="1.2" stroke-dasharray="1.2 1.2"/></svg>
<svg style="left:12px;top:933px" width="24" height="20" viewBox="0 0 24 20"><rect x="8" y="1" width="14" height="10" fill="none" stroke="#d4d4d4" stroke-width="1.6" stroke-width="1.5"/><path d="M8 6H1.5v10h14v-5" fill="none" stroke="#d4d4d4" stroke-width="1.6" stroke-width="1.5"/></svg>
<svg style="left:36px;top:954px" width="5" height="5" viewBox="0 0 5 5"><path d="M4.5 0V4.5H0z" fill="#c8c8c8"/></svg>
<svg style="left:1592px;top:77px" width="10" height="6" viewBox="0 0 10 6"><path d="M4.5 .8L2 3l2.5 2.2M8.5 .8L6 3l2.5 2.2" fill="none" stroke="#c8c8c8" stroke-width="1.2"/></svg>
<svg style="left:1903px;top:77px" width="10" height="6" viewBox="0 0 10 6"><path d="M1 .8l2.5 2.2L1 5.2M5 .8l2.5 2.2L5 5.2" fill="none" stroke="#c8c8c8" stroke-width="1.2"/></svg>
<svg style="left:1572px;top:93px" width="25.200000000000003" height="5" viewBox="0 0 25.200000000000003 5"><rect x="0.0" y="0" width="1.2" height="5" fill="#1e1e1e"/><rect x="2.1" y="0" width="1.2" height="5" fill="#1e1e1e"/><rect x="4.2" y="0" width="1.2" height="5" fill="#1e1e1e"/><rect x="6.3" y="0" width="1.2" height="5" fill="#1e1e1e"/><rect x="8.4" y="0" width="1.2" height="5" fill="#1e1e1e"/><rect x="10.5" y="0" width="1.2" height="5" fill="#1e1e1e"/><rect x="12.6" y="0" width="1.2" height="5" fill="#1e1e1e"/><rect x="14.7" y="0" width="1.2" height="5" fill="#1e1e1e"/><rect x="16.8" y="0" width="1.2" height="5" fill="#1e1e1e"/><rect x="18.9" y="0" width="1.2" height="5" fill="#1e1e1e"/><rect x="21.0" y="0" width="1.2" height="5" fill="#1e1e1e"/><rect x="23.1" y="0" width="1.2" height="5" fill="#1e1e1e"/></svg>
<svg style="left:1572px;top:215px" width="25.200000000000003" height="5" viewBox="0 0 25.200000000000003 5"><rect x="0.0" y="0" width="1.2" height="5" fill="#1e1e1e"/><rect x="2.1" y="0" width="1.2" height="5" fill="#1e1e1e"/><rect x="4.2" y="0" width="1.2" height="5" fill="#1e1e1e"/><rect x="6.3" y="0" width="1.2" height="5" fill="#1e1e1e"/><rect x="8.4" y="0" width="1.2" height="5" fill="#1e1e1e"/><rect x="10.5" y="0" width="1.2" height="5" fill="#1e1e1e"/><rect x="12.6" y="0" width="1.2" height="5" fill="#1e1e1e"/><rect x="14.7" y="0" width="1.2" height="5" fill="#1e1e1e"/><rect x="16.8" y="0" width="1.2" height="5" fill="#1e1e1e"/><rect x="18.9" y="0" width="1.2" height="5" fill="#1e1e1e"/><rect x="21.0" y="0" width="1.2" height="5" fill="#1e1e1e"/><rect x="23.1" y="0" width="1.2" height="5" fill="#1e1e1e"/></svg>
<svg style="left:1572px;top:268px" width="25.200000000000003" height="5" viewBox="0 0 25.200000000000003 5"><rect x="0.0" y="0" width="1.2" height="5" fill="#1e1e1e"/><rect x="2.1" y="0" width="1.2" height="5" fill="#1e1e1e"/><rect x="4.2" y="0" width="1.2" height="5" fill="#1e1e1e"/><rect x="6.3" y="0" width="1.2" height="5" fill="#1e1e1e"/><rect x="8.4" y="0" width="1.2" height="5" fill="#1e1e1e"/><rect x="10.5" y="0" width="1.2" height="5" fill="#1e1e1e"/><rect x="12.6" y="0" width="1.2" height="5" fill="#1e1e1e"/><rect x="14.7" y="0" width="1.2" height="5" fill="#1e1e1e"/><rect x="16.8" y="0" width="1.2" height="5" fill="#1e1e1e"/><rect x="18.9" y="0" width="1.2" height="5" fill="#1e1e1e"/><rect x="21.0" y="0" width="1.2" height="5" fill="#1e1e1e"/><rect x="23.1" y="0" width="1.2" height="5" fill="#1e1e1e"/></svg>
<svg style="left:1572px;top:352px" width="25.200000000000003" height="5" viewBox="0 0 25.200000000000003 5"><rect x="0.0" y="0" width="1.2" height="5" fill="#1e1e1e"/><rect x="2.1" y="0" width="1.2" height="5" fill="#1e1e1e"/><rect x="4.2" y="0" width="1.2" height="5" fill="#1e1e1e"/><rect x="6.3" y="0" width="1.2" height="5" fill="#1e1e1e"/><rect x="8.4" y="0" width="1.2" height="5" fill="#1e1e1e"/><rect x="10.5" y="0" width="1.2" height="5" fill="#1e1e1e"/><rect x="12.6" y="0" width="1.2" height="5" fill="#1e1e1e"/><rect x="14.7" y="0" width="1.2" height="5" fill="#1e1e1e"/><rect x="16.8" y="0" width="1.2" height="5" fill="#1e1e1e"/><rect x="18.9" y="0" width="1.2" height="5" fill="#1e1e1e"/><rect x="21.0" y="0" width="1.2" height="5" fill="#1e1e1e"/><rect x="23.1" y="0" width="1.2" height="5" fill="#1e1e1e"/></svg>
<svg style="left:1572px;top:438px" width="25.200000000000003" height="5" viewBox="0 0 25.200000000000003 5"><rect x="0.0" y="0" width="1.2" height="5" fill="#1e1e1e"/><rect x="2.1" y="0" width="1.2" height="5" fill="#1e1e1e"/><rect x="4.2" y="0" width="1.2" height="5" fill="#1e1e1e"/><rect x="6.3" y="0" width="1.2" height="5" fill="#1e1e1e"/><rect x="8.4" y="0" width="1.2" height="5" fill="#1e1e1e"/><rect x="10.5" y="0" width="1.2" height="5" fill="#1e1e1e"/><rect x="12.6" y="0" width="1.2" height="5" fill="#1e1e1e"/><rect x="14.7" y="0" width="1.2" height="5" fill="#1e1e1e"/><rect x="16.8" y="0" width="1.2" height="5" fill="#1e1e1e"/><rect x="18.9" y="0" width="1.2" height="5" fill="#1e1e1e"/><rect x="21.0" y="0" width="1.2" height="5" fill="#1e1e1e"/><rect x="23.1" y="0" width="1.2" height="5" fill="#1e1e1e"/></svg>
<svg style="left:1572px;top:490px" width="25.200000000000003" height="5" viewBox="0 0 25.200000000000003 5"><rect x="0.0" y="0" width="1.2" height="5" fill="#1e1e1e"/><rect x="2.1" y="0" width="1.2" height="5" fill="#1e1e1e"/><rect x="4.2" y="0" width="1.2" height="5" fill="#1e1e1e"/><rect x="6.3" y="0" width="1.2" height="5" fill="#1e1e1e"/><rect x="8.4" y="0" width="1.2" height="5" fill="#1e1e1e"/><rect x="10.5" y="0" width="1.2" height="5" fill="#1e1e1e"/><rect x="12.6" y="0" width="1.2" height="5" fill="#1e1e1e"/><rect x="14.7" y="0" width="1.2" height="5" fill="#1e1e1e"/><rect x="16.8" y="0" width="1.2" height="5" fill="#1e1e1e"/><rect x="18.9" y="0" width="1.2" height="5" fill="#1e1e1e"/><rect x="21.0" y="0" width="1.2" height="5" fill="#1e1e1e"/><rect x="23.1" y="0" width="1.2" height="5" fill="#1e1e1e"/></svg>
<div class="a" style="left:1561px;top:209px;width:47px;height:2px;background:#262626;"></div>
<div class="a" style="left:1561px;top:260px;width:47px;height:2px;background:#262626;"></div>
<div class="a" style="left:1561px;top:347px;width:47px;height:2px;background:#262626;"></div>
<div class="a" style="left:1561px;top:433px;width:47px;height:2px;background:#262626;"></div>
<div class="a" style="left:1561px;top:484px;width:47px;height:2px;background:#262626;"></div>
<div class="a" style="left:1561px;top:535px;width:47px;height:2px;background:#262626;"></div>
<svg style="left:1574px;top:106px" width="22" height="22" viewBox="0 0 22 22"><rect x="1" y="1" width="5" height="5" fill="none" stroke="#d4d4d4" stroke-width="1.2"/><rect x="1" y="8.5" width="5" height="5" fill="none" stroke="#d4d4d4" stroke-width="1.2"/><rect x="0.5" y="15.5" width="6" height="6" fill="#d4d4d4"/><path d="M11 4.5c5-1 7.5 4 6 9-1 3-3 5-6 6" fill="none" stroke="#d4d4d4" stroke-width="1.5"/><path d="M9.5 2l4.5 .5-2.5 4z" fill="#d4d4d4"/></svg>
<svg style="left:1575px;top:143px" width="20" height="19" viewBox="0 0 20 19"><path d="M2 1l17 8.5L2 18z" fill="#d4d4d4"/></svg>
<svg style="left:1575px;top:180px" width="20" height="16" viewBox="0 0 20 16"><rect x="1" y="5" width="17" height="10" rx="1" fill="#d4d4d4"/><rect x="3" y="1.5" width="4.5" height="5" fill="#d4d4d4"/><rect x="11.5" y="1.5" width="4.5" height="5" fill="#d4d4d4"/></svg>
<svg style="left:1573px;top:227px" width="22" height="22" viewBox="0 0 22 22"><circle cx="11" cy="11" r="10" fill="none" stroke="#d4d4d4" stroke-width="1.7"/><circle cx="11" cy="6.3" r="1.3" fill="#d4d4d4"/><path d="M11 9v8" stroke="#d4d4d4" stroke-width="2"/></svg>
<div class="a" style="left:1567px;top:275px;width:36px;height:30px;background:#1e1e1e;border-radius:3px;border:1px solid #2e2e2e"></div>
<svg style="left:1572px;top:279px" width="27" height="25" viewBox="0 0 24 22"><rect x="0" y="1" width="2.2" height="2.2" fill="#d4d4d4"/><rect x="0" y="5" width="2.2" height="2.2" fill="#d4d4d4"/><rect x="0" y="9" width="2.2" height="2.2" fill="#d4d4d4"/><path d="M3.5 2h4M3.5 6h4M3.5 10h4" stroke="#d4d4d4" stroke-width="1.3"/><path d="M21 5c-2.5 2-5.5 5-7.5 8l2 1.6c2.5-2.8 4.8-6.2 5.5-9.6zM13 13.8c-2.5 0-3.8 1.8-4 3.8-.2 1.5-1 2.5-2.5 3 4 1 8-.5 8.3-5z" fill="#d4d4d4"/></svg>
<svg style="left:1572px;top:315px" width="25" height="22" viewBox="0 0 25 22"><path d="M2 2.5c3-2 6-2 8 0 1 1.5 0 3-2 3.5-2 .3-4.5 0-6-3.5zM10.5 3h12" fill="#d4d4d4" stroke="#d4d4d4" stroke-width="2"/><path d="M3 13h13" stroke="#d4d4d4" stroke-width="2.5"/><path d="M16.5 13c0-3 2-5 4.5-6 1.5 2 1.5 9 0 12-2.5-1-4.5-3-4.5-6z" fill="#d4d4d4"/></svg>
<div class="t" style="left:1574px;top:364.72px;font-size:21px;color:#d4d4d4;">A</div>
<div class="a" style="left:1591px;top:365px;width:1.5px;height:21px;background:#d4d4d4;"></div>
<svg style="left:1576px;top:401px" width="16" height="20" viewBox="0 0 16 20"><path d="M6.5 1H15V2.5H13V19.5H11V2.5H9.5V19.5H7.5V11.5H6.5A5.25 5.25 0 0 1 6.5 1Z" fill="#d4d4d4"/></svg>
<svg style="left:1572px;top:448px" width="24" height="34" viewBox="0 0 24 34"><rect x="2" y="1.5" width="19.5" height="19.5" fill="none" stroke="#d4d4d4" stroke-width="2.6"/><path d="M11.75 5.2l1.6 3.4 3.7.4-2.8 2.5.8 3.7-3.3-1.9-3.3 1.9.8-3.7-2.8-2.5 3.7-.4z" fill="#d4d4d4"/><path d="M8 21.5l-3.5 9M15.5 21.5l3.5 9" stroke="#d4d4d4" stroke-width="2.2"/></svg>
<svg style="left:1568px;top:497px" width="32" height="32" viewBox="0 0 32 32"><path d="M10.5 1v30M19.8 1v30M1 11.5h30M1 21.3h30" stroke="#a8a8a8" stroke-width="1.7"/></svg>
<div class="t" style="letter-spacing:-0.609px;left:1623px;top:98.07px;font-size:13.5px;color:#e8e8e8;font-weight:bold;">Properties</div>
<svg style="left:1902px;top:101px" width="11" height="8" viewBox="0 0 11 8"><rect x="0" y="0" width="10" height="1" fill="#b8b8b8"/><rect x="0" y="2" width="10" height="1" fill="#b8b8b8"/><rect x="0" y="4" width="10" height="1" fill="#b8b8b8"/><rect x="0" y="6" width="10" height="1" fill="#b8b8b8"/></svg>
<div class="a" style="left:1625px;top:131px;width:27px;height:28px;background:#1e1e1e;border-radius:3px"></div>
<svg style="left:1629px;top:137px" width="19" height="16" viewBox="0 0 19 16"><rect x="0.8" y="0.8" width="17.4" height="14.4" fill="none" stroke="#d0d0d0" stroke-width="1.6"/><path d="M2 14V11l3-3 2 1.5 3-4 4 5 2-1v4.5z" fill="#d0d0d0"/><rect x="13" y="3" width="2.5" height="2" fill="#d0d0d0"/></svg>
<div class="t" style="letter-spacing:-0.315px;left:1660px;top:139.80px;font-size:13px;color:#c4c4c4;">Pixel Layer</div>
<div class="a" style="left:1611px;top:165px;width:309px;height:2px;background:#262626;"></div>
<div class="a" style="left:1899px;top:167px;width:21px;height:351px;background:#2a2a2a;"></div>
<div class="a" style="left:1902px;top:188px;width:14px;height:249px;background:#474747;"></div>
<svg style="left:1905px;top:178px" width="10" height="6" viewBox="0 0 10 6"><path d="M1 5l4-4 4 4" fill="none" stroke="#999" stroke-width="1.1"/></svg>
<svg style="left:1905px;top:503px" width="10" height="6" viewBox="0 0 10 6"><path d="M1 1l4 4 4-4" fill="none" stroke="#999" stroke-width="1.1"/></svg>
<svg style="left:1620px;top:181px" width="11" height="7" viewBox="0 0 11 7"><path d="M1 1l4.5 4.5L10 1" fill="none" stroke="#b8b8b8" stroke-width="1.3"/></svg>
<div class="t" style="letter-spacing:-0.592px;left:1642px;top:177.57px;font-size:13.5px;color:#e8e8e8;font-weight:bold;">Transform</div>
<div class="a" style="left:1623px;top:216px;width:30px;height:30px;background:#1e1e1e;border-radius:3px"></div>
<svg style="left:1632px;top:222px" width="12" height="19" viewBox="0 0 12 19"><path d="M3 8.5V4a3 3 0 0 1 6 0v4.5M3 10.5V15a3 3 0 0 0 6 0v-4.5M6 6v7" fill="none" stroke="#d8d8d8" stroke-width="1.6"/></svg>
<div class="t" style="left:1667px;top:208.50px;font-size:13px;color:#b0b0b0;">W</div>
<div class="a" style="left:1684px;top:204px;width:67px;height:21px;background:#262626;border:1px solid #464646;border-radius:2px;"></div>
<div class="t" style="left:1690px;top:208.50px;font-size:13px;color:#e0e0e0;">771 px</div>
<div class="t" style="left:1773px;top:208.50px;font-size:13px;color:#b0b0b0;">X</div>
<div class="a" style="left:1788px;top:204px;width:67px;height:21px;background:#262626;border:1px solid #464646;border-radius:2px;"></div>
<div class="t" style="left:1794px;top:208.50px;font-size:13px;color:#e0e0e0;">97 px</div>
<div class="t" style="left:1670px;top:239.50px;font-size:13px;color:#b0b0b0;">H</div>
<div class="a" style="left:1684px;top:235px;width:67px;height:21px;background:#262626;border:1px solid #464646;border-radius:2px;"></div>
<div class="t" style="left:1690px;top:239.50px;font-size:13px;color:#e0e0e0;">178.88 px</div>
<div class="t" style="left:1773px;top:239.50px;font-size:13px;color:#b0b0b0;">Y</div>
<div class="a" style="left:1788px;top:235px;width:67px;height:21px;background:#262626;border:1px solid #464646;border-radius:2px;"></div>
<div class="t" style="left:1794px;top:239.50px;font-size:13px;color:#e0e0e0;">333.13 px</div>
<svg style="left:1661px;top:275px" width="18" height="14" viewBox="0 0 18 14"><path d="M1 13h16M1 13L13 3M8.5 7c1.5 1.5 2 3.5 2 6" fill="none" stroke="#c8c8c8" stroke-width="1.4"/></svg>
<div class="a" style="left:1686px;top:272px;width:67px;height:21px;background:#262626;border:1px solid #464646;border-radius:2px;"></div>
<div class="t" style="left:1691px;top:276.50px;font-size:13px;color:#e0e0e0;">0.00°</div>
<div class="a" style="left:1734px;top:273px;width:1px;height:19px;background:#464646;"></div>
<svg style="left:1739px;top:280px" width="10" height="6" viewBox="0 0 10 6"><path d="M1 1l4 4 4-4" fill="none" stroke="#c0c0c0" stroke-width="1.3"/></svg>
<svg style="left:1793px;top:274px" width="21" height="17" viewBox="0 0 21 17"><path d="M1 1.5v14l7-7z" fill="none" stroke="#c8c8c8" stroke-width="1.4"/><path d="M20 1.5v14l-7-7z" fill="#c8c8c8"/><path d="M10.5 0v17" stroke="#c8c8c8" stroke-width="1" stroke-dasharray="1.5 1.2"/></svg>
<svg style="left:1829px;top:272px" width="19" height="21" viewBox="0 0 19 21"><path d="M2 1h14l-7 7z" fill="none" stroke="#c8c8c8" stroke-width="1.4"/><path d="M2 20h14l-7-7z" fill="#c8c8c8"/><path d="M0 10.5h18" stroke="#c8c8c8" stroke-width="1" stroke-dasharray="1.5 1.2"/></svg>
<div class="a" style="left:1611px;top:311px;width:288px;height:2px;background:#262626;"></div>
<svg style="left:1620px;top:327px" width="11" height="7" viewBox="0 0 11 7"><path d="M1 1l4.5 4.5L10 1" fill="none" stroke="#b8b8b8" stroke-width="1.3"/></svg>
<div class="t" style="letter-spacing:-0.167px;left:1641px;top:323.57px;font-size:13.5px;color:#e8e8e8;font-weight:bold;">Align and Distribute</div>
<div class="t" style="letter-spacing:-0.278px;left:1623px;top:351.50px;font-size:13px;color:#b0b0b0;">Align:</div>
<svg style="left:1628px;top:382px" width="19" height="20" viewBox="0 0 19 20"><path d="M1 0v20" stroke="#8a8a8a" stroke-width="1.3"/><rect x="3.5" y="4" width="7" height="4.5" fill="#8a8a8a"/><rect x="3.5" y="11" width="13" height="4.5" fill="#8a8a8a"/></svg>
<svg style="left:1664px;top:382px" width="19" height="20" viewBox="0 0 19 20"><path d="M9.5 0v20" stroke="#8a8a8a" stroke-width="1.3"/><rect x="6" y="4" width="7" height="4.5" fill="#8a8a8a"/><rect x="3" y="11" width="13" height="4.5" fill="#8a8a8a"/></svg>
<svg style="left:1700px;top:382px" width="19" height="20" viewBox="0 0 19 20"><path d="M18 0v20" stroke="#8a8a8a" stroke-width="1.3"/><rect x="8.5" y="4" width="7" height="4.5" fill="#8a8a8a"/><rect x="2.5" y="11" width="13" height="4.5" fill="#8a8a8a"/></svg>
<svg style="left:1758px;top:383px" width="20" height="20" viewBox="0 0 20 20"><path d="M0 1h18" stroke="#8a8a8a" stroke-width="1.3"/><rect x="3" y="3" width="4.5" height="14" fill="#8a8a8a"/><rect x="10" y="3" width="4.5" height="8" fill="#8a8a8a"/></svg>
<svg style="left:1794px;top:383px" width="20" height="20" viewBox="0 0 20 20"><path d="M0 9h18" stroke="#8a8a8a" stroke-width="1.3"/><rect x="3" y="2" width="4.5" height="14" fill="#8a8a8a"/><rect x="10" y="5" width="4.5" height="8" fill="#8a8a8a"/></svg>
<svg style="left:1830px;top:382px" width="20" height="20" viewBox="0 0 20 20"><path d="M0 18h18" stroke="#8a8a8a" stroke-width="1.3"/><rect x="3" y="2" width="4.5" height="14" fill="#8a8a8a"/><rect x="10" y="8" width="4.5" height="8" fill="#8a8a8a"/></svg>
<svg style="left:1832px;top:427px" width="18" height="6" viewBox="0 0 18 6"><circle cx="2.5" cy="3" r="2" fill="#d8d8d8"/><circle cx="8.5" cy="3" r="2" fill="#d8d8d8"/><circle cx="14.5" cy="3" r="2" fill="#d8d8d8"/></svg>
<div class="a" style="left:1611px;top:448px;width:288px;height:2px;background:#262626;"></div>
<svg style="left:1620px;top:462px" width="11" height="7" viewBox="0 0 11 7"><path d="M1 1l4.5 4.5L10 1" fill="none" stroke="#b8b8b8" stroke-width="1.3"/></svg>
<div class="t" style="letter-spacing:-0.662px;left:1641px;top:459.07px;font-size:13.5px;color:#e8e8e8;font-weight:bold;">Quick Actions</div>
<div class="a" style="left:1623px;top:489px;width:233px;height:28px;background:#262626;border:1px solid #3e3e3e;border-radius:3px;"></div>
<div class="t" style="letter-spacing:-0.449px;left:1682px;top:496.50px;font-size:13px;color:#e8e8e8;">Remove Background</div>
<div class="t" style="letter-spacing:-1.009px;left:1622px;top:563.57px;font-size:13.5px;color:#e8e8e8;font-weight:bold;">Layers</div>
<svg style="left:1902px;top:568px" width="11" height="8" viewBox="0 0 11 8"><rect x="0" y="0" width="10" height="1" fill="#b8b8b8"/><rect x="0" y="2" width="10" height="1" fill="#b8b8b8"/><rect x="0" y="4" width="10" height="1" fill="#b8b8b8"/><rect x="0" y="6" width="10" height="1" fill="#b8b8b8"/></svg>
<div class="a" style="left:1615px;top:601px;width:109px;height:24px;background:#262626;border:1px solid #414141;border-radius:3px;"></div>
<svg style="left:1625px;top:607px" width="14" height="14" viewBox="0 0 14 14"><circle cx="5.5" cy="5.5" r="4.3" fill="none" stroke="#d8d8d8" stroke-width="1.6"/><path d="M8.5 8.5l4.5 4.5" stroke="#d8d8d8" stroke-width="2"/></svg>
<div class="t" style="letter-spacing:-0.866px;left:1643px;top:606.57px;font-size:13.5px;color:#e8e8e8;">Kind</div>
<svg style="left:1710px;top:612px" width="10" height="6" viewBox="0 0 10 6"><path d="M1 1l4 4 4-4" fill="none" stroke="#c0c0c0" stroke-width="1.3"/></svg>
<svg style="left:1739px;top:605px" width="17" height="14" viewBox="0 0 17 14"><rect x="0.8" y="0.8" width="15" height="12" fill="none" stroke="#c8c8c8" stroke-width="1.4"/><path d="M3 11l3-4 2 2 2-3 4 5z" fill="#c8c8c8"/></svg>
<svg style="left:1769px;top:605px" width="15" height="15" viewBox="0 0 15 15"><circle cx="7.5" cy="7.5" r="6.5" fill="none" stroke="#c8c8c8" stroke-width="1.4"/><path d="M12 3L3 12a6.5 6.5 0 0 0 9-9z" fill="#c8c8c8"/></svg>
<svg style="left:1800px;top:605px" width="15" height="15" viewBox="0 0 15 15"><path d="M1 3V1h13v2M7.5 1v13M4.5 14h6" fill="none" stroke="#c8c8c8" stroke-width="2"/></svg>
<svg style="left:1829px;top:605px" width="16" height="16" viewBox="0 0 16 16"><rect x="2.5" y="2.5" width="11" height="11" fill="none" stroke="#c8c8c8" stroke-width="1.3"/><g fill="#c8c8c8"><rect x="0.5" y="0.5" width="4" height="4"/><rect x="11.5" y="0.5" width="4" height="4"/><rect x="0.5" y="11.5" width="4" height="4"/><rect x="11.5" y="11.5" width="4" height="4"/></g></svg>
<svg style="left:1860px;top:604px" width="15" height="17" viewBox="0 0 15 17"><path d="M4 8V1h6l4 4v11H9" fill="none" stroke="#c8c8c8" stroke-width="1.4"/><rect x="0.5" y="9" width="7" height="7" rx="1" fill="#c8c8c8"/></svg>
<div class="a" style="left:1888px;top:601px;width:13px;height:23px;border-radius:6.5px;border:1px solid #4a4a4a;background:#2a2a2a"></div>
<div class="a" style="left:1888px;top:601px;width:13px;height:13px;border-radius:6.5px;background:#d8d8d8"></div>
<div class="a" style="left:1611px;top:628px;width:309px;height:1px;background:#2b2b2b;"></div>
<div class="a" style="left:1615px;top:636px;width:162px;height:24px;background:#262626;border:1px solid #414141;border-radius:3px;"></div>
<div class="t" style="letter-spacing:-0.639px;left:1626px;top:641.57px;font-size:13.5px;color:#e8e8e8;">Normal</div>
<svg style="left:1763px;top:646px" width="10" height="6" viewBox="0 0 10 6"><path d="M1 1l4 4 4-4" fill="none" stroke="#c0c0c0" stroke-width="1.3"/></svg>
<div class="t" style="letter-spacing:-0.225px;left:1785px;top:642.50px;font-size:13px;color:#b0b0b0;">Opacity:</div>
<div class="a" style="left:1837px;top:637px;width:62px;height:21px;background:#262626;border:1px solid #414141;border-radius:3px;"></div>
<div class="a" style="left:1881px;top:638px;width:1px;height:19px;background:#414141;"></div>
<div class="t" style="letter-spacing:-0.643px;left:1842px;top:641.00px;font-size:13px;color:#e8e8e8;">100%</div>
<svg style="left:1885px;top:646px" width="10" height="6" viewBox="0 0 10 6"><path d="M1 1l4 4 4-4" fill="none" stroke="#c0c0c0" stroke-width="1.3"/></svg>
<div class="a" style="left:1611px;top:664px;width:309px;height:1px;background:#2b2b2b;"></div>
<div class="t" style="letter-spacing:-0.462px;left:1619px;top:677.50px;font-size:13px;color:#b0b0b0;">Lock:</div>
<svg style="left:1659px;top:675px" width="16" height="16" viewBox="0 0 16 16"><rect x="0.7" y="0.7" width="14" height="14" fill="#d0d0d0" stroke="#d0d0d0" stroke-width="1.2"/><g fill="#2a2a2a"><rect x="1.5" y="1.5" width="4" height="4"/><rect x="9.5" y="1.5" width="4" height="4"/><rect x="5.5" y="5.5" width="4" height="4"/><rect x="1.5" y="9.5" width="4" height="4"/><rect x="9.5" y="9.5" width="4" height="4"/></g></svg>
<svg style="left:1686px;top:674px" width="18" height="18" viewBox="0 0 18 18"><path d="M17 1c-2.5 2-5.5 5-7.5 8l2 1.6c2.5-2.8 4.8-6.2 5.5-9.6zM9 9.8c-2.5 0-3.8 1.8-4 3.8-.2 1.5-1 2.5-2.5 3 4 1 8-.5 8.3-5z" fill="#d0d0d0"/></svg>
<svg style="left:1712px;top:674px" width="18" height="18" viewBox="0 0 18 18"><path d="M9 1v16M1 9h16" stroke="#d0d0d0" stroke-width="1.6"/><path d="M9 0l3 3H6zM9 18l3-3H6zM0 9l3-3v6zM18 9l-3-3v6z" fill="#d0d0d0"/></svg>
<svg style="left:1739px;top:674px" width="19" height="18" viewBox="0 0 19 18"><rect x="3.5" y="4" width="12" height="10" fill="none" stroke="#d0d0d0" stroke-width="1.4"/><path d="M0 4h3M16 4h3M0 14h3M16 14h3M3.5 0v3M15.5 0v3M3.5 15v3M15.5 15v3" stroke="#d0d0d0" stroke-width="1.2"/></svg>
<svg style="left:1770px;top:674px" width="15" height="18" viewBox="0 0 15 18"><path d="M3.5 8V5a4 4 0 0 1 8 0v3" fill="none" stroke="#d0d0d0" stroke-width="1.8"/><rect x="1" y="8" width="13" height="9" rx="1" fill="#d0d0d0"/><circle cx="7.5" cy="12.5" r="1.3" fill="#323232"/></svg>
<div class="t" style="letter-spacing:-0.271px;left:1812px;top:677.50px;font-size:13px;color:#b0b0b0;">Fill:</div>
<div class="a" style="left:1837px;top:672px;width:62px;height:21px;background:#262626;border:1px solid #414141;border-radius:3px;"></div>
<div class="a" style="left:1881px;top:673px;width:1px;height:19px;background:#414141;"></div>
<div class="t" style="letter-spacing:-0.643px;left:1842px;top:676.00px;font-size:13px;color:#e8e8e8;">100%</div>
<svg style="left:1885px;top:681px" width="10" height="6" viewBox="0 0 10 6"><path d="M1 1l4 4 4-4" fill="none" stroke="#c0c0c0" stroke-width="1.3"/></svg>
<div class="a" style="left:1611px;top:702px;width:288px;height:1px;background:#2b2b2b;"></div>
<div class="a" style="left:1899px;top:702px;width:21px;height:286px;background:#2c2c2c;"></div>
<div class="a" style="left:1611px;top:702px;width:38px;height:252px;background:#2f2f2f;"></div>
<div class="a" style="left:1611px;top:954px;width:288px;height:34px;background:#2b2b2b;"></div>
<div class="a" style="left:1649px;top:702px;width:250px;height:49px;background:#474747;"></div>
<svg style="left:1620px;top:722px" width="20" height="12" viewBox="0 0 20 12"><path d="M1 6c2.5-3.5 5.5-5 9-5s6.5 1.5 9 5c-2.5 3.5-5.5 5-9 5s-6.5-1.5-9-5z" fill="#dcdcdc"/><circle cx="10" cy="6" r="3.3" fill="#2a2a2a"/><circle cx="10.6" cy="4.4" r="0.8" fill="#dcdcdc"/></svg>
<svg style="left:1651px;top:705px" width="46" height="46" viewBox="0 0 46 46"><path d="M0.75 10V0.75H15M31 0.75h14.25V10M45.25 36v9.25H31M15 45.25H0.75V36" fill="none" stroke="#f0f0f0" stroke-width="1.5"/></svg>
<div class="a" style="left:1654px;top:708px;width:39px;height:38px;background-color:#fff;background-image:linear-gradient(45deg,#cfcfcf 25%,transparent 25%,transparent 75%,#cfcfcf 75%),linear-gradient(45deg,#cfcfcf 25%,transparent 25%,transparent 75%,#cfcfcf 75%);background-size:8px 8px;background-position:0 0,4px 4px"></div>
<svg style="left:1660px;top:718px" width="28" height="8" viewBox="0 0 28 8"><path d="M1 6C6 2 14 0 24 5" fill="none" stroke="#222" stroke-width="1.5"/></svg>
<div class="t" style="letter-spacing:-0.620px;left:1706px;top:721.07px;font-size:13.5px;color:#f0f0f0;">Layer 1</div>
<div class="a" style="left:1622px;top:771px;width:16px;height:16px;background:#2d2d2d;border:1px solid #3c3c3c"></div>
<div class="a" style="left:1654px;top:760px;width:39px;height:39px;background-color:#fff;background-image:linear-gradient(45deg,#cfcfcf 25%,transparent 25%,transparent 75%,#cfcfcf 75%),linear-gradient(45deg,#cfcfcf 25%,transparent 25%,transparent 75%,#cfcfcf 75%);background-size:8px 8px;background-position:0 0,4px 4px"></div>
<div class="a" style="left:1654px;top:760px;width:39px;height:39px;background:transparent;border:1px solid #5a5a5a"></div>
<div class="a" style="left:1676px;top:781px;width:16px;height:17px;background:#2a2a2a;"></div>
<svg style="left:1678px;top:783px" width="12" height="13" viewBox="0 0 12 13"><path d="M5 1h6v7H6M1 6h5v6H1z" fill="#d8d8d8"/></svg>
<svg style="left:1660px;top:763px" width="7" height="4" viewBox="0 0 7 4"><path d="M0 0l1.5 3 1.5-3 1.5 3 1.5-3" fill="none" stroke="#333" stroke-width="0.8"/></svg>
<div class="t" style="letter-spacing:-0.557px;left:1706px;top:772.07px;font-size:13.5px;color:#e8e8e8;">We Design Marbellla</div>
<div class="t" style="letter-spacing:2.365px;left:1868px;top:771.46px;font-size:16px;color:#d0d0d0;font-style:italic;">fx</div>
<div class="a" style="left:1887px;top:754px;width:12px;height:52px;background:#2a2a2a;"></div>
<svg style="left:1888px;top:776px" width="10" height="6" viewBox="0 0 10 6"><path d="M1 5l4-4 4 4" fill="none" stroke="#b0b0b0" stroke-width="1.2"/></svg>
<svg style="left:1674px;top:808px" width="20" height="12" viewBox="0 0 20 12"><path d="M1 6c2.5-3.5 5.5-5 9-5s6.5 1.5 9 5c-2.5 3.5-5.5 5-9 5s-6.5-1.5-9-5z" fill="#a8a8a8"/><circle cx="10" cy="6" r="3.3" fill="#2a2a2a"/><circle cx="10.6" cy="4.4" r="0.8" fill="#a8a8a8"/></svg>
<div class="t" style="letter-spacing:-0.466px;left:1697px;top:806.57px;font-size:13.5px;color:#e0e0e0;">Effects</div>
<svg style="left:1695px;top:832px" width="20" height="12" viewBox="0 0 20 12"><path d="M1 6c2.5-3.5 5.5-5 9-5s6.5 1.5 9 5c-2.5 3.5-5.5 5-9 5s-6.5-1.5-9-5z" fill="#a8a8a8"/><circle cx="10" cy="6" r="3.3" fill="#2a2a2a"/><circle cx="10.6" cy="4.4" r="0.8" fill="#a8a8a8"/></svg>
<div class="t" style="letter-spacing:-0.682px;left:1718px;top:830.57px;font-size:13.5px;color:#e0e0e0;">Color Overlay</div>
<div class="a" style="left:1611px;top:851px;width:288px;height:1px;background:#2b2b2b;"></div>
<div class="a" style="left:1622px;top:871px;width:16px;height:16px;background:#2d2d2d;border:1px solid #3c3c3c"></div>
<svg style="left:1664px;top:869px" width="18" height="18" viewBox="0 0 18 18"><path d="M1.5 4V1.5h15V4M9 1.5V16M5.5 16.5h7" fill="none" stroke="#d8d8d8" stroke-width="2.2"/></svg>
<div class="t" style="letter-spacing:-0.319px;left:1706px;top:870.57px;font-size:13.5px;color:#e8e8e8;">How to fix th... in Photoshop</div>
<div class="a" style="left:1611px;top:902px;width:288px;height:1px;background:#2b2b2b;"></div>
<svg style="left:1620px;top:923px" width="20" height="12" viewBox="0 0 20 12"><path d="M1 6c2.5-3.5 5.5-5 9-5s6.5 1.5 9 5c-2.5 3.5-5.5 5-9 5s-6.5-1.5-9-5z" fill="#dcdcdc"/><circle cx="10" cy="6" r="3.3" fill="#2a2a2a"/><circle cx="10.6" cy="4.4" r="0.8" fill="#dcdcdc"/></svg>
<div class="a" style="left:1653px;top:909px;width:41px;height:41px;background:#ffffff;border:1px solid #5a5a5a"></div>
<div class="t" style="letter-spacing:-0.533px;left:1706px;top:921.57px;font-size:13.5px;color:#e8e8e8;font-style:italic;">Background</div>
<svg style="left:1866px;top:921px" width="14" height="17" viewBox="0 0 14 17"><path d="M3 7.5V5a4 4 0 0 1 8 0v2.5" fill="none" stroke="#d0d0d0" stroke-width="1.5"/><rect x="1" y="7.5" width="12" height="9" fill="none" stroke="#d0d0d0" stroke-width="1.4"/><circle cx="7" cy="12" r="1.3" fill="#d0d0d0"/></svg>
<div class="a" style="left:1611px;top:953px;width:288px;height:1px;background:#2b2b2b;"></div>
<div class="a" style="left:1611px;top:988px;width:309px;height:30px;background:#323232;"></div>
<div class="a" style="left:1611px;top:1018px;width:309px;height:2px;background:#262626;"></div>
<svg style="left:1664px;top:997px" width="18" height="11" viewBox="0 0 18 11"><path d="M6 1.5H4.5a4 4 0 0 0 0 8H6M12 1.5h1.5a4 4 0 0 1 0 8H12M5 5.5h8" fill="none" stroke="#b8b8b8" stroke-width="1.6"/></svg>
<div class="t" style="letter-spacing:1.031px;left:1700px;top:994.96px;font-size:16px;color:#b8b8b8;font-style:italic;">fx</div>
<svg style="left:1715px;top:1008px" width="4" height="3" viewBox="0 0 4 3"><path d="M0 0h4L2 2.5z" fill="#fff"/></svg>
<svg style="left:1733px;top:996px" width="18" height="14" viewBox="0 0 18 14"><rect x="0" y="0" width="17" height="13" fill="#b8b8b8"/><circle cx="8.5" cy="6.5" r="4" fill="#2e2e2e"/></svg>
<svg style="left:1768px;top:995px" width="17" height="17" viewBox="0 0 17 17"><circle cx="8" cy="8" r="7" fill="none" stroke="#b8b8b8" stroke-width="1.4"/><path d="M13 3L3 13a7 7 0 0 0 10-10z" fill="#b8b8b8"/><path d="M14 15h4l-2 2z" fill="#fff"/></svg>
<svg style="left:1800px;top:996px" width="19" height="15" viewBox="0 0 19 15"><path d="M0 2h6l2 2h10v11H0z" fill="#b8b8b8"/></svg>
<svg style="left:1834px;top:995px" width="17" height="17" viewBox="0 0 17 17"><rect x="1" y="1" width="15" height="15" fill="none" stroke="#b8b8b8" stroke-width="1.5"/><path d="M8.5 4.5v8M4.5 8.5h8" stroke="#b8b8b8" stroke-width="1.5"/></svg>
<svg style="left:1868px;top:994px" width="17" height="18" viewBox="0 0 17 18"><path d="M1 3h15M6 3V1h5v2M2.5 5h12v12h-12z" fill="none" stroke="#b8b8b8" stroke-width="1.5"/><path d="M6 7v8M8.5 7v8M11 7v8" stroke="#b8b8b8" stroke-width="1.2"/></svg>
<div class="a" style="left:1107px;top:258px;width:453px;height:678px;background:#1f1f1f;box-shadow:-2px 2px 5px rgba(0,0,0,0.18)"></div>
<div class="a" style="left:1108px;top:262px;width:451px;height:36px;background:#282828;"></div>
<div class="a" style="left:1108px;top:262px;width:107px;height:36px;background:#323232;"></div>
<div class="a" style="left:1108px;top:298px;width:451px;height:596px;background:#323232;"></div>
<div class="a" style="left:1108px;top:894px;width:451px;height:2px;background:#222;"></div>
<div class="a" style="left:1108px;top:896px;width:451px;height:30px;background:#323232;"></div>
<div class="a" style="left:1108px;top:926px;width:451px;height:1px;background:#222;"></div>
<div class="a" style="left:1108px;top:927px;width:451px;height:8px;background:#323232;"></div>
<svg style="left:1316px;top:929px" width="20" height="5" viewBox="0 0 20 5"><rect x="0.0" y="0" width="1.2" height="4" fill="#1e1e1e"/><rect x="2.1" y="0" width="1.2" height="4" fill="#1e1e1e"/><rect x="4.2" y="0" width="1.2" height="4" fill="#1e1e1e"/><rect x="6.3" y="0" width="1.2" height="4" fill="#1e1e1e"/><rect x="8.4" y="0" width="1.2" height="4" fill="#1e1e1e"/><rect x="10.5" y="0" width="1.2" height="4" fill="#1e1e1e"/><rect x="12.6" y="0" width="1.2" height="4" fill="#1e1e1e"/><rect x="14.7" y="0" width="1.2" height="4" fill="#1e1e1e"/><rect x="16.8" y="0" width="1.2" height="4" fill="#1e1e1e"/><rect x="18.9" y="0" width="1.2" height="4" fill="#1e1e1e"/></svg>
<div class="t" style="letter-spacing:-0.553px;left:1120px;top:272.00px;font-size:13px;color:#f2f2f2;font-weight:bold;">Brush Settings</div>
<div class="t" style="letter-spacing:-1.082px;left:1227px;top:272.00px;font-size:13px;color:#a0a0a0;font-weight:bold;">Brushes</div>
<svg style="left:1517px;top:276px" width="12" height="10" viewBox="0 0 12 10"><path d="M1 1l4 4-4 4M6 1l4 4-4 4" fill="none" stroke="#b8b8b8" stroke-width="1.2"/></svg>
<div class="a" style="left:1535px;top:274px;width:1px;height:13px;background:#a0a0a0;"></div>
<svg style="left:1543px;top:276px" width="11" height="8" viewBox="0 0 11 8"><rect x="0" y="0" width="10" height="1" fill="#b8b8b8"/><rect x="0" y="2" width="10" height="1" fill="#b8b8b8"/><rect x="0" y="4" width="10" height="1" fill="#b8b8b8"/><rect x="0" y="6" width="10" height="1" fill="#b8b8b8"/></svg>
<div class="a" style="left:1159px;top:311px;width:73px;height:27px;background:#262626;border:1px solid #3c3c3c;border-radius:3px;"></div>
<div class="t" style="letter-spacing:-0.416px;left:1173px;top:319.00px;font-size:13px;color:#ececec;">Brushes</div>
<div class="a" style="left:1115px;top:351px;width:162px;height:309px;background:#2f2f2f;border:1px solid #2b2b2b"></div>
<div class="t" style="letter-spacing:-0.422px;left:1151px;top:356.50px;font-size:13px;color:#e8e8e8;">Brush Tip Shape</div>
<div class="a" style="left:1117px;top:375px;width:158px;height:24px;background:#474747;"></div>
<div class="a" style="left:1130px;top:382px;width:12px;height:12px;background:#d8d8d8;border-radius:2px"></div>
<svg style="left:1131px;top:383px" width="10" height="10" viewBox="0 0 10 10"><path d="M1.8 5.2l2.3 2.3 4.3-5" fill="none" stroke="#222" stroke-width="1.8"/></svg>
<div class="t" style="letter-spacing:-0.391px;left:1148px;top:381.50px;font-size:13px;color:#e6e6e6;">Shape Dynamics</div>
<svg style="left:1255px;top:379px" width="14" height="16" viewBox="0 0 14 16"><path d="M3 7V4.5a3.5 3.5 0 0 1 7 0" fill="none" stroke="#cfcfcf" stroke-width="1.4"/><rect x="1" y="7" width="12" height="8.5" fill="none" stroke="#cfcfcf" stroke-width="1.4"/><circle cx="7" cy="11.2" r="1.3" fill="#cfcfcf"/></svg>
<div class="a" style="left:1130px;top:404.5px;width:12px;height:12px;background:transparent;border:1.2px solid #5a5a5a;border-radius:2px"></div>
<div class="t" style="letter-spacing:-0.268px;left:1148px;top:404.00px;font-size:13px;color:#e6e6e6;">Scattering</div>
<svg style="left:1255px;top:401.5px" width="14" height="16" viewBox="0 0 14 16"><path d="M3 7V4.5a3.5 3.5 0 0 1 7 0" fill="none" stroke="#cfcfcf" stroke-width="1.4"/><rect x="1" y="7" width="12" height="8.5" fill="none" stroke="#cfcfcf" stroke-width="1.4"/><circle cx="7" cy="11.2" r="1.3" fill="#cfcfcf"/></svg>
<div class="a" style="left:1130px;top:429px;width:12px;height:12px;background:transparent;border:1.2px solid #5a5a5a;border-radius:2px"></div>
<div class="t" style="letter-spacing:-0.099px;left:1148px;top:428.50px;font-size:13px;color:#e6e6e6;">Texture</div>
<svg style="left:1255px;top:426px" width="14" height="16" viewBox="0 0 14 16"><path d="M3 7V4.5a3.5 3.5 0 0 1 7 0" fill="none" stroke="#cfcfcf" stroke-width="1.4"/><rect x="1" y="7" width="12" height="8.5" fill="none" stroke="#cfcfcf" stroke-width="1.4"/><circle cx="7" cy="11.2" r="1.3" fill="#cfcfcf"/></svg>
<div class="a" style="left:1130px;top:452.5px;width:12px;height:12px;background:transparent;border:1.2px solid #5a5a5a;border-radius:2px"></div>
<div class="t" style="letter-spacing:-0.454px;left:1148px;top:452.00px;font-size:13px;color:#e6e6e6;">Dual Brush</div>
<svg style="left:1255px;top:449.5px" width="14" height="16" viewBox="0 0 14 16"><path d="M3 7V4.5a3.5 3.5 0 0 1 7 0" fill="none" stroke="#cfcfcf" stroke-width="1.4"/><rect x="1" y="7" width="12" height="8.5" fill="none" stroke="#cfcfcf" stroke-width="1.4"/><circle cx="7" cy="11.2" r="1.3" fill="#cfcfcf"/></svg>
<div class="a" style="left:1130px;top:477px;width:12px;height:12px;background:transparent;border:1.2px solid #5a5a5a;border-radius:2px"></div>
<div class="t" style="letter-spacing:-0.426px;left:1148px;top:476.50px;font-size:13px;color:#e6e6e6;">Color Dynamics</div>
<svg style="left:1255px;top:474px" width="14" height="16" viewBox="0 0 14 16"><path d="M3 7V4.5a3.5 3.5 0 0 1 7 0" fill="none" stroke="#cfcfcf" stroke-width="1.4"/><rect x="1" y="7" width="12" height="8.5" fill="none" stroke="#cfcfcf" stroke-width="1.4"/><circle cx="7" cy="11.2" r="1.3" fill="#cfcfcf"/></svg>
<div class="a" style="left:1130px;top:499.5px;width:12px;height:12px;background:transparent;border:1.2px solid #5a5a5a;border-radius:2px"></div>
<div class="t" style="letter-spacing:-0.123px;left:1148px;top:499.00px;font-size:13px;color:#e6e6e6;">Transfer</div>
<svg style="left:1255px;top:496.5px" width="14" height="16" viewBox="0 0 14 16"><path d="M3 7V4.5a3.5 3.5 0 0 1 7 0" fill="none" stroke="#cfcfcf" stroke-width="1.4"/><rect x="1" y="7" width="12" height="8.5" fill="none" stroke="#cfcfcf" stroke-width="1.4"/><circle cx="7" cy="11.2" r="1.3" fill="#cfcfcf"/></svg>
<div class="a" style="left:1130px;top:523.5px;width:12px;height:12px;background:transparent;border:1.2px solid #5a5a5a;border-radius:2px"></div>
<div class="t" style="letter-spacing:-0.548px;left:1148px;top:523.00px;font-size:13px;color:#e6e6e6;">Brush Pose</div>
<svg style="left:1255px;top:520.5px" width="14" height="16" viewBox="0 0 14 16"><path d="M3 7V4.5a3.5 3.5 0 0 1 7 0" fill="none" stroke="#cfcfcf" stroke-width="1.4"/><rect x="1" y="7" width="12" height="8.5" fill="none" stroke="#cfcfcf" stroke-width="1.4"/><circle cx="7" cy="11.2" r="1.3" fill="#cfcfcf"/></svg>
<div class="a" style="left:1130px;top:548.5px;width:12px;height:12px;background:transparent;border:1.2px solid #5a5a5a;border-radius:2px"></div>
<div class="t" style="letter-spacing:-0.500px;left:1148px;top:548.00px;font-size:13px;color:#e6e6e6;">Noise</div>
<svg style="left:1255px;top:545.5px" width="14" height="16" viewBox="0 0 14 16"><path d="M3 7V4.5a3.5 3.5 0 0 1 7 0" fill="none" stroke="#cfcfcf" stroke-width="1.4"/><rect x="1" y="7" width="12" height="8.5" fill="none" stroke="#cfcfcf" stroke-width="1.4"/><circle cx="7" cy="11.2" r="1.3" fill="#cfcfcf"/></svg>
<div class="a" style="left:1130px;top:572.5px;width:12px;height:12px;background:transparent;border:1.2px solid #5a5a5a;border-radius:2px"></div>
<div class="t" style="letter-spacing:-0.395px;left:1148px;top:572.00px;font-size:13px;color:#e6e6e6;">Wet Edges</div>
<svg style="left:1255px;top:569.5px" width="14" height="16" viewBox="0 0 14 16"><path d="M3 7V4.5a3.5 3.5 0 0 1 7 0" fill="none" stroke="#cfcfcf" stroke-width="1.4"/><rect x="1" y="7" width="12" height="8.5" fill="none" stroke="#cfcfcf" stroke-width="1.4"/><circle cx="7" cy="11.2" r="1.3" fill="#cfcfcf"/></svg>
<div class="a" style="left:1130px;top:594.5px;width:12px;height:12px;background:transparent;border:1.2px solid #5a5a5a;border-radius:2px"></div>
<div class="t" style="letter-spacing:-0.360px;left:1148px;top:594.00px;font-size:13px;color:#e6e6e6;">Build-up</div>
<svg style="left:1255px;top:591.5px" width="14" height="16" viewBox="0 0 14 16"><path d="M3 7V4.5a3.5 3.5 0 0 1 7 0" fill="none" stroke="#cfcfcf" stroke-width="1.4"/><rect x="1" y="7" width="12" height="8.5" fill="none" stroke="#cfcfcf" stroke-width="1.4"/><circle cx="7" cy="11.2" r="1.3" fill="#cfcfcf"/></svg>
<div class="a" style="left:1130px;top:619px;width:12px;height:12px;background:#d8d8d8;border-radius:2px"></div>
<svg style="left:1131px;top:620px" width="10" height="10" viewBox="0 0 10 10"><path d="M1.8 5.2l2.3 2.3 4.3-5" fill="none" stroke="#222" stroke-width="1.8"/></svg>
<div class="t" style="letter-spacing:-0.254px;left:1148px;top:618.50px;font-size:13px;color:#e6e6e6;">Smoothing</div>
<svg style="left:1255px;top:616px" width="14" height="16" viewBox="0 0 14 16"><path d="M3 7V4.5a3.5 3.5 0 0 1 7 0" fill="none" stroke="#cfcfcf" stroke-width="1.4"/><rect x="1" y="7" width="12" height="8.5" fill="none" stroke="#cfcfcf" stroke-width="1.4"/><circle cx="7" cy="11.2" r="1.3" fill="#cfcfcf"/></svg>
<div class="a" style="left:1130px;top:643.5px;width:12px;height:12px;background:transparent;border:1.2px solid #5a5a5a;border-radius:2px"></div>
<div class="t" style="letter-spacing:-0.152px;left:1148px;top:643.00px;font-size:13px;color:#e6e6e6;">Protect Texture</div>
<svg style="left:1255px;top:640.5px" width="14" height="16" viewBox="0 0 14 16"><path d="M3 7V4.5a3.5 3.5 0 0 1 7 0" fill="none" stroke="#cfcfcf" stroke-width="1.4"/><rect x="1" y="7" width="12" height="8.5" fill="none" stroke="#cfcfcf" stroke-width="1.4"/><circle cx="7" cy="11.2" r="1.3" fill="#cfcfcf"/></svg>
<div class="a" style="left:1117px;top:422px;width:158px;height:1px;background:#2a2a2a;"></div>
<div class="a" style="left:1117px;top:446px;width:158px;height:1px;background:#2a2a2a;"></div>
<div class="a" style="left:1117px;top:470px;width:158px;height:1px;background:#2a2a2a;"></div>
<div class="a" style="left:1117px;top:493.5px;width:158px;height:1px;background:#2a2a2a;"></div>
<div class="a" style="left:1117px;top:517px;width:158px;height:1px;background:#2a2a2a;"></div>
<div class="a" style="left:1117px;top:541px;width:158px;height:1px;background:#2a2a2a;"></div>
<div class="t" style="letter-spacing:-0.198px;left:1291px;top:316.00px;font-size:13px;color:#c8c8c8;">Size Jitter</div>
<div class="a" style="left:1486px;top:310px;width:63px;height:21px;background:#262626;border:1px solid #444;border-radius:0px;"></div>
<div class="t" style="letter-spacing:-0.531px;left:1491px;top:315.00px;font-size:13px;color:#f0f0f0;">0%</div>
<div class="a" style="left:1293px;top:340px;width:254px;height:3px;background:#555555;border-radius:1px"></div>
<svg style="left:1286px;top:344px" width="13" height="12" viewBox="0 0 13 12"><path d="M6.5 0.5L12.5 6v5.5H0.5V6z" fill="#f0f0f0"/></svg>
<svg style="left:1295px;top:366px" width="16" height="15" viewBox="0 0 16 15"><path d="M8 1l7 13H1z" fill="#d8d8d8"/><path d="M8 5v5" stroke="#323232" stroke-width="1.6"/><circle cx="8" cy="12" r="1" fill="#323232"/></svg>
<div class="t" style="letter-spacing:-0.338px;left:1321px;top:367.50px;font-size:13px;color:#c8c8c8;">Control:</div>
<div class="a" style="left:1371px;top:363px;width:108px;height:24px;background:#262626;border:1px solid #1473e6;border-radius:3px;border-width:1.5px"></div>
<div class="t" style="letter-spacing:-0.414px;left:1381px;top:368.50px;font-size:13px;color:#f0f0f0;">Pen Pressure</div>
<svg style="left:1464px;top:373px" width="10" height="6" viewBox="0 0 10 6"><path d="M1 1l4 4 4-4" fill="none" stroke="#c0c0c0" stroke-width="1.3"/></svg>
<div class="a" style="left:1486px;top:363px;width:63px;height:21px;background:#262626;border:1px solid #444;border-radius:0px;"></div>
<div class="t" style="letter-spacing:-0.134px;left:1291px;top:396.00px;font-size:13px;color:#c8c8c8;">Minimum Diameter</div>
<div class="a" style="left:1486px;top:391px;width:63px;height:21px;background:#262626;border:1px solid #444;border-radius:0px;"></div>
<div class="t" style="letter-spacing:-0.531px;left:1491px;top:396.00px;font-size:13px;color:#f0f0f0;">0%</div>
<div class="a" style="left:1293px;top:421px;width:254px;height:3px;background:#555555;border-radius:1px"></div>
<svg style="left:1286px;top:425px" width="13" height="12" viewBox="0 0 13 12"><path d="M6.5 0.5L12.5 6v5.5H0.5V6z" fill="#f0f0f0"/></svg>
<div class="t" style="letter-spacing:-0.314px;left:1291px;top:449.00px;font-size:13px;color:#777777;">Tilt Scale</div>
<div class="a" style="left:1486px;top:443px;width:63px;height:21px;background:#262626;border:1px solid #444;border-radius:0px;"></div>
<div class="a" style="left:1293px;top:473px;width:254px;height:3px;background:#555555;border-radius:1px"></div>
<div class="t" style="letter-spacing:-0.178px;left:1291px;top:507.50px;font-size:13px;color:#c8c8c8;">Angle Jitter</div>
<div class="a" style="left:1486px;top:503px;width:63px;height:21px;background:#262626;border:1px solid #444;border-radius:0px;"></div>
<div class="t" style="letter-spacing:-0.531px;left:1491px;top:508.00px;font-size:13px;color:#f0f0f0;">0%</div>
<div class="a" style="left:1293px;top:533px;width:254px;height:3px;background:#555555;border-radius:1px"></div>
<svg style="left:1286px;top:537px" width="13" height="12" viewBox="0 0 13 12"><path d="M6.5 0.5L12.5 6v5.5H0.5V6z" fill="#f0f0f0"/></svg>
<div class="t" style="letter-spacing:-0.338px;left:1308px;top:560.50px;font-size:13px;color:#c8c8c8;">Control:</div>
<div class="a" style="left:1359px;top:556px;width:120px;height:24px;background:#262626;border:1px solid #3c3c3c;border-radius:3px;"></div>
<div class="t" style="letter-spacing:0.356px;left:1370px;top:561.50px;font-size:13px;color:#f0f0f0;">Off</div>
<svg style="left:1464px;top:566px" width="10" height="6" viewBox="0 0 10 6"><path d="M1 1l4 4 4-4" fill="none" stroke="#c0c0c0" stroke-width="1.3"/></svg>
<div class="a" style="left:1486px;top:556px;width:63px;height:21px;background:#262626;border:1px solid #444;border-radius:0px;"></div>
<div class="t" style="letter-spacing:-0.294px;left:1291px;top:595.50px;font-size:13px;color:#c8c8c8;">Roundness Jitter</div>
<div class="a" style="left:1486px;top:591px;width:63px;height:21px;background:#262626;border:1px solid #444;border-radius:0px;"></div>
<div class="t" style="letter-spacing:-0.531px;left:1491px;top:596.00px;font-size:13px;color:#f0f0f0;">0%</div>
<div class="a" style="left:1293px;top:621px;width:254px;height:3px;background:#555555;border-radius:1px"></div>
<svg style="left:1286px;top:625px" width="13" height="12" viewBox="0 0 13 12"><path d="M6.5 0.5L12.5 6v5.5H0.5V6z" fill="#f0f0f0"/></svg>
<div class="t" style="letter-spacing:-0.338px;left:1322px;top:647.00px;font-size:13px;color:#c8c8c8;">Control:</div>
<div class="a" style="left:1371px;top:643px;width:108px;height:24px;background:#262626;border:1px solid #3c3c3c;border-radius:3px;"></div>
<div class="t" style="letter-spacing:0.356px;left:1382px;top:648.00px;font-size:13px;color:#f0f0f0;">Off</div>
<svg style="left:1464px;top:653px" width="10" height="6" viewBox="0 0 10 6"><path d="M1 1l4 4 4-4" fill="none" stroke="#c0c0c0" stroke-width="1.3"/></svg>
<div class="a" style="left:1486px;top:643px;width:63px;height:21px;background:#262626;border:1px solid #444;border-radius:0px;"></div>
<div class="t" style="letter-spacing:-0.370px;left:1291px;top:675.50px;font-size:13px;color:#777777;">Minimum Roundness</div>
<div class="a" style="left:1486px;top:672px;width:63px;height:21px;background:#262626;border:1px solid #444;border-radius:0px;"></div>
<div class="a" style="left:1293px;top:701px;width:254px;height:3px;background:#555555;border-radius:1px"></div>
<div class="a" style="left:1284px;top:725px;width:12px;height:12px;background:transparent;border:1.2px solid #5a5a5a;border-radius:2px"></div>
<div class="t" style="letter-spacing:-0.321px;left:1302px;top:724.50px;font-size:13px;color:#e6e6e6;">Flip X Jitter</div>
<div class="a" style="left:1421px;top:725px;width:12px;height:12px;background:transparent;border:1.2px solid #5a5a5a;border-radius:2px"></div>
<div class="t" style="letter-spacing:-0.284px;left:1439px;top:724.50px;font-size:13px;color:#e6e6e6;">Flip Y Jitter</div>
<div class="a" style="left:1284px;top:745px;width:12px;height:12px;background:transparent;border:1.2px solid #5a5a5a;border-radius:2px"></div>
<div class="t" style="letter-spacing:-0.283px;left:1302px;top:744.50px;font-size:13px;color:#e6e6e6;">Brush Projection</div>
<div class="a" style="left:1114px;top:762px;width:438px;height:125px;background:#474747;border-bottom:1px solid #222"></div>
<svg style="left:1114px;top:762px" width="438" height="125" viewBox="0 0 438 125"><path d="M41,62 C60,56 100,44 133,44 C170,44 200,54 231,64 C260,74 280,81 300,80.5 C325,80 345,76 360,72 C372,69 382,65 390,63.5" fill="none" stroke="#ffffff" stroke-width="52" stroke-linecap="round"/></svg>
<svg style="left:1508px;top:902px" width="15" height="15" viewBox="0 0 15 15"><rect x="0.75" y="0.75" width="13.5" height="13.5" fill="none" stroke="#d0d0d0" stroke-width="1.5"/><path d="M7.5 3.5v8M3.5 7.5h8" stroke="#d0d0d0" stroke-width="1.5"/></svg>
</body></html>
